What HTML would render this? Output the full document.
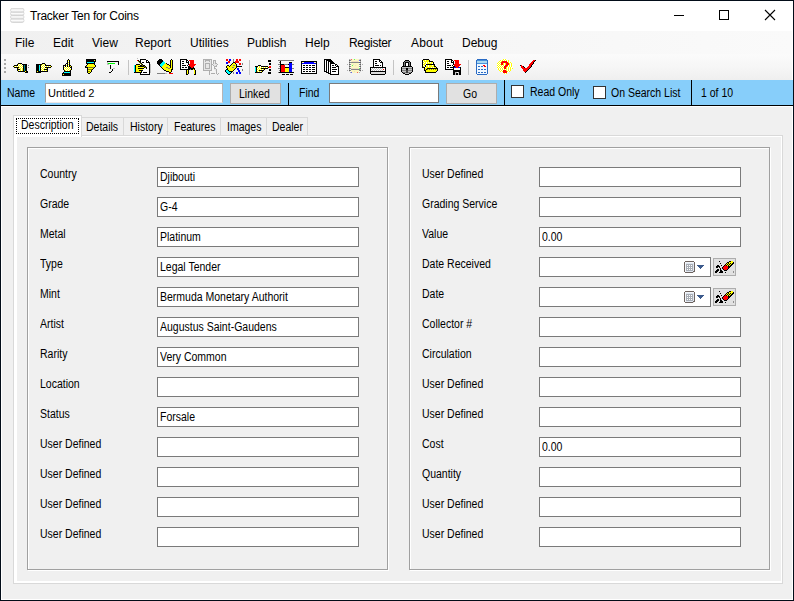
<!DOCTYPE html>
<html><head><meta charset="utf-8"><style>
html,body{margin:0;padding:0;width:794px;height:601px;overflow:hidden;background:#fff}
#win{position:absolute;left:0;top:0;width:794px;height:601px;background:#f0f0f0;font-family:"Liberation Sans",sans-serif;color:#000}
#win *{position:absolute}
.abs{position:absolute}
.t12{font-size:12px;line-height:12px;white-space:pre}
.t11{font-size:12px;line-height:12px;white-space:pre;transform:scaleX(0.875);transform-origin:0 0}
.lb{font-size:12px;line-height:12px;white-space:pre;transform:scaleX(0.875);transform-origin:0 0}
.vl{font-size:12px;line-height:12px;white-space:pre;transform:scaleX(0.875);transform-origin:0 0}
.tb{height:18px;border:1px solid #7a7a7a;background:#fff}
.btn{border:1px solid #adadad;background:#e1e1e1}
.cb{width:11px;height:11px;border:1px solid #333;background:#fff}
.grp{box-sizing:border-box;border:1px solid #a0a0a0;box-shadow:1px 1px 0 #fff, inset 1px 1px 0 #fff}
.ebtn{width:21px;height:16px;border:1px solid #adadad;background:#e1e1e1}
.cal{width:10px;height:11px;border:1px solid #7f7a78;border-radius:1px;background:#eef0f4}
.dbicon{left:10px;top:8px;width:14px;height:14px}
.dbicon i{left:0;width:14px;height:3.5px;border-radius:2px;background:linear-gradient(#d8d8d8,#fafafa 50%,#d0d0d0)}

.bb{font-size:11px;line-height:11px;white-space:pre;transform:scaleX(0.95);transform-origin:0 0}

</style></head><body>
<div id="win">
<!-- title bar -->
<div class="abs" style="left:1px;top:1px;width:792px;height:30px;background:#fff"></div>
<svg class="abs" style="left:10px;top:8px" width="15" height="15" viewBox="0 0 15 15"><defs><linearGradient id="dg" x1="0" x2="0" y1="0" y2="1"><stop offset="0" stop-color="#e6e6e6"/><stop offset="0.5" stop-color="#fbfbfb"/><stop offset="1" stop-color="#d6d6d6"/></linearGradient></defs><rect x="0.5" y="10.5" width="13.5" height="4" rx="2" fill="url(#dg)" stroke="#d2d2d2" stroke-width="0.8"/><rect x="0.5" y="7" width="13.5" height="4" rx="2" fill="url(#dg)" stroke="#d2d2d2" stroke-width="0.8"/><rect x="0.5" y="3.5" width="13.5" height="4" rx="2" fill="url(#dg)" stroke="#d2d2d2" stroke-width="0.8"/><rect x="0.5" y="0.3" width="13.5" height="4" rx="2" fill="url(#dg)" stroke="#d2d2d2" stroke-width="0.8"/></svg>
<div class="t12" style="left:30px;top:10px;letter-spacing:-0.25px">Tracker Ten for Coins</div>
<div class="abs" style="left:674px;top:15px;width:10px;height:1px;background:#000"></div>
<div class="abs" style="left:719px;top:10px;width:8px;height:8px;border:1px solid #000"></div>
<svg class="abs" style="left:764px;top:9px" width="12" height="12"><path d="M1 1L11 11M11 1L1 11" stroke="#000" stroke-width="1.1"/></svg>
<!-- menu -->
<div class="abs" style="left:1px;top:31px;width:791px;height:23px;background:linear-gradient(to right,#f0f0f0,#f5f5f5 45%,#fafafa)"></div>
<div class="t12" style="left:15px;top:37px">File</div>
<div class="t12" style="left:53px;top:37px">Edit</div>
<div class="t12" style="left:92px;top:37px">View</div>
<div class="t12" style="left:135px;top:37px">Report</div>
<div class="t12" style="left:190px;top:37px">Utilities</div>
<div class="t12" style="left:247px;top:37px">Publish</div>
<div class="t12" style="left:305px;top:37px">Help</div>
<div class="t12" style="left:349px;top:37px;letter-spacing:-0.3px">Register</div>
<div class="t12" style="left:411px;top:37px;letter-spacing:0.2px">About</div>
<div class="t12" style="left:462px;top:37px">Debug</div>
<!-- toolbar -->
<div class="abs" style="left:1px;top:54px;width:791px;height:26px;background:linear-gradient(#fbfbfb,#f6f6f6 50%,#efefef)"></div>
<div class="abs" style="left:792px;top:31px;width:1px;height:49px;background:#fff"></div>
<svg class="abs" style="left:12px;top:59px" width="18" height="14" shape-rendering="crispEdges"><rect x="6" y="4" width="4" height="1" fill="#000"/><rect x="5" y="5" width="1" height="1" fill="#000"/><rect x="6" y="5" width="1" height="1" fill="#ffff00"/><rect x="7" y="5" width="1" height="1" fill="#fff"/><rect x="8" y="5" width="1" height="1" fill="#ffff00"/><rect x="9" y="5" width="1" height="1" fill="#fff"/><rect x="10" y="5" width="5" height="1" fill="#000"/><rect x="2" y="6" width="4" height="1" fill="#000"/><rect x="6" y="6" width="1" height="1" fill="#fff"/><rect x="7" y="6" width="1" height="1" fill="#ffff00"/><rect x="8" y="6" width="1" height="1" fill="#fff"/><rect x="9" y="6" width="1" height="1" fill="#ffff00"/><rect x="10" y="6" width="1" height="1" fill="#fff"/><rect x="11" y="6" width="1" height="1" fill="#000"/><rect x="12" y="6" width="1" height="1" fill="#008b8b"/><rect x="13" y="6" width="2" height="1" fill="#000"/><rect x="16" y="6" width="1" height="1" fill="#808080"/><rect x="1" y="7" width="1" height="1" fill="#000"/><rect x="2" y="7" width="1" height="1" fill="#ffff00"/><rect x="3" y="7" width="1" height="1" fill="#fff"/><rect x="4" y="7" width="1" height="1" fill="#ffff00"/><rect x="5" y="7" width="1" height="1" fill="#fff"/><rect x="6" y="7" width="1" height="1" fill="#ffff00"/><rect x="7" y="7" width="1" height="1" fill="#fff"/><rect x="8" y="7" width="1" height="1" fill="#ffff00"/><rect x="9" y="7" width="1" height="1" fill="#fff"/><rect x="10" y="7" width="1" height="1" fill="#ffff00"/><rect x="11" y="7" width="1" height="1" fill="#000"/><rect x="12" y="7" width="1" height="1" fill="#008b8b"/><rect x="13" y="7" width="2" height="1" fill="#000"/><rect x="2" y="8" width="5" height="1" fill="#000"/><rect x="7" y="8" width="1" height="1" fill="#ffff00"/><rect x="8" y="8" width="1" height="1" fill="#fff"/><rect x="9" y="8" width="1" height="1" fill="#ffff00"/><rect x="10" y="8" width="1" height="1" fill="#fff"/><rect x="11" y="8" width="1" height="1" fill="#000"/><rect x="12" y="8" width="1" height="1" fill="#008b8b"/><rect x="13" y="8" width="2" height="1" fill="#000"/><rect x="16" y="8" width="1" height="1" fill="#808080"/><rect x="5" y="9" width="1" height="1" fill="#000"/><rect x="6" y="9" width="1" height="1" fill="#ffff00"/><rect x="7" y="9" width="1" height="1" fill="#fff"/><rect x="8" y="9" width="1" height="1" fill="#ffff00"/><rect x="9" y="9" width="1" height="1" fill="#fff"/><rect x="10" y="9" width="1" height="1" fill="#ffff00"/><rect x="11" y="9" width="1" height="1" fill="#000"/><rect x="12" y="9" width="1" height="1" fill="#008b8b"/><rect x="13" y="9" width="2" height="1" fill="#000"/><rect x="5" y="10" width="3" height="1" fill="#000"/><rect x="8" y="10" width="1" height="1" fill="#ffff00"/><rect x="9" y="10" width="1" height="1" fill="#fff"/><rect x="10" y="10" width="1" height="1" fill="#ffff00"/><rect x="11" y="10" width="1" height="1" fill="#000"/><rect x="12" y="10" width="1" height="1" fill="#008b8b"/><rect x="13" y="10" width="2" height="1" fill="#000"/><rect x="5" y="11" width="1" height="1" fill="#000"/><rect x="6" y="11" width="1" height="1" fill="#ffff00"/><rect x="7" y="11" width="1" height="1" fill="#fff"/><rect x="8" y="11" width="1" height="1" fill="#ffff00"/><rect x="9" y="11" width="1" height="1" fill="#fff"/><rect x="10" y="11" width="1" height="1" fill="#ffff00"/><rect x="11" y="11" width="1" height="1" fill="#000"/><rect x="12" y="11" width="1" height="1" fill="#008b8b"/><rect x="13" y="11" width="2" height="1" fill="#000"/><rect x="6" y="12" width="7" height="1" fill="#000"/><rect x="13" y="12" width="1" height="1" fill="#ffff00"/><rect x="14" y="12" width="2" height="1" fill="#000"/><rect x="13" y="13" width="3" height="1" fill="#000"/></svg>
<svg class="abs" style="left:34px;top:59px" width="18" height="14" shape-rendering="crispEdges"><rect x="8" y="4" width="3" height="1" fill="#000"/><rect x="2" y="5" width="6" height="1" fill="#000"/><rect x="8" y="5" width="1" height="1" fill="#ffff00"/><rect x="9" y="5" width="1" height="1" fill="#fff"/><rect x="10" y="5" width="1" height="1" fill="#ffff00"/><rect x="11" y="5" width="1" height="1" fill="#000"/><rect x="2" y="6" width="3" height="1" fill="#000"/><rect x="5" y="6" width="1" height="1" fill="#00ffff"/><rect x="6" y="6" width="1" height="1" fill="#000"/><rect x="7" y="6" width="1" height="1" fill="#ffff00"/><rect x="8" y="6" width="1" height="1" fill="#fff"/><rect x="9" y="6" width="1" height="1" fill="#ffff00"/><rect x="10" y="6" width="1" height="1" fill="#fff"/><rect x="11" y="6" width="6" height="1" fill="#000"/><rect x="2" y="7" width="3" height="1" fill="#000"/><rect x="5" y="7" width="1" height="1" fill="#00ffff"/><rect x="6" y="7" width="1" height="1" fill="#000"/><rect x="7" y="7" width="1" height="1" fill="#fff"/><rect x="8" y="7" width="1" height="1" fill="#ffff00"/><rect x="9" y="7" width="1" height="1" fill="#fff"/><rect x="10" y="7" width="1" height="1" fill="#ffff00"/><rect x="11" y="7" width="1" height="1" fill="#fff"/><rect x="12" y="7" width="1" height="1" fill="#ffff00"/><rect x="13" y="7" width="1" height="1" fill="#fff"/><rect x="14" y="7" width="1" height="1" fill="#ffff00"/><rect x="15" y="7" width="1" height="1" fill="#fff"/><rect x="16" y="7" width="1" height="1" fill="#ffff00"/><rect x="17" y="7" width="1" height="1" fill="#000"/><rect x="2" y="8" width="3" height="1" fill="#000"/><rect x="5" y="8" width="1" height="1" fill="#00ffff"/><rect x="6" y="8" width="1" height="1" fill="#000"/><rect x="7" y="8" width="1" height="1" fill="#ffff00"/><rect x="8" y="8" width="1" height="1" fill="#fff"/><rect x="9" y="8" width="1" height="1" fill="#ffff00"/><rect x="10" y="8" width="1" height="1" fill="#fff"/><rect x="11" y="8" width="6" height="1" fill="#000"/><rect x="2" y="9" width="3" height="1" fill="#000"/><rect x="5" y="9" width="1" height="1" fill="#00ffff"/><rect x="6" y="9" width="1" height="1" fill="#000"/><rect x="7" y="9" width="1" height="1" fill="#fff"/><rect x="8" y="9" width="1" height="1" fill="#ffff00"/><rect x="9" y="9" width="1" height="1" fill="#fff"/><rect x="10" y="9" width="1" height="1" fill="#ffff00"/><rect x="11" y="9" width="1" height="1" fill="#fff"/><rect x="12" y="9" width="1" height="1" fill="#ffff00"/><rect x="13" y="9" width="1" height="1" fill="#000"/><rect x="2" y="10" width="3" height="1" fill="#000"/><rect x="5" y="10" width="1" height="1" fill="#00ffff"/><rect x="6" y="10" width="1" height="1" fill="#000"/><rect x="7" y="10" width="1" height="1" fill="#ffff00"/><rect x="8" y="10" width="1" height="1" fill="#fff"/><rect x="9" y="10" width="1" height="1" fill="#ffff00"/><rect x="10" y="10" width="4" height="1" fill="#000"/><rect x="2" y="11" width="3" height="1" fill="#000"/><rect x="5" y="11" width="1" height="1" fill="#00ffff"/><rect x="6" y="11" width="1" height="1" fill="#000"/><rect x="7" y="11" width="1" height="1" fill="#fff"/><rect x="8" y="11" width="1" height="1" fill="#ffff00"/><rect x="9" y="11" width="1" height="1" fill="#fff"/><rect x="10" y="11" width="1" height="1" fill="#ffff00"/><rect x="11" y="11" width="1" height="1" fill="#fff"/><rect x="12" y="11" width="1" height="1" fill="#ffff00"/><rect x="13" y="11" width="1" height="1" fill="#000"/><rect x="2" y="12" width="1" height="1" fill="#000"/><rect x="3" y="12" width="1" height="1" fill="#ffff00"/><rect x="4" y="12" width="10" height="1" fill="#000"/><rect x="2" y="13" width="5" height="1" fill="#000"/></svg>
<svg class="abs" style="left:58px;top:57px" width="18" height="19" shape-rendering="crispEdges"><rect x="10" y="2" width="1" height="1" fill="#000"/><rect x="9" y="3" width="1" height="1" fill="#000"/><rect x="10" y="3" width="1" height="1" fill="#ffff00"/><rect x="11" y="3" width="1" height="1" fill="#000"/><rect x="9" y="4" width="1" height="1" fill="#000"/><rect x="10" y="4" width="1" height="1" fill="#fff"/><rect x="11" y="4" width="1" height="1" fill="#000"/><rect x="9" y="5" width="1" height="1" fill="#000"/><rect x="10" y="5" width="1" height="1" fill="#ffff00"/><rect x="11" y="5" width="1" height="1" fill="#000"/><rect x="8" y="6" width="2" height="1" fill="#000"/><rect x="10" y="6" width="1" height="1" fill="#fff"/><rect x="11" y="6" width="1" height="1" fill="#000"/><rect x="7" y="7" width="1" height="1" fill="#000"/><rect x="8" y="7" width="1" height="1" fill="#fff"/><rect x="9" y="7" width="1" height="1" fill="#000"/><rect x="10" y="7" width="1" height="1" fill="#ffff00"/><rect x="11" y="7" width="1" height="1" fill="#000"/><rect x="5" y="8" width="3" height="1" fill="#000"/><rect x="8" y="8" width="1" height="1" fill="#ffff00"/><rect x="9" y="8" width="1" height="1" fill="#000"/><rect x="10" y="8" width="1" height="1" fill="#fff"/><rect x="11" y="8" width="2" height="1" fill="#000"/><rect x="5" y="9" width="1" height="1" fill="#000"/><rect x="6" y="9" width="1" height="1" fill="#fff"/><rect x="7" y="9" width="1" height="1" fill="#000"/><rect x="8" y="9" width="1" height="1" fill="#fff"/><rect x="9" y="9" width="1" height="1" fill="#000"/><rect x="10" y="9" width="1" height="1" fill="#ffff00"/><rect x="11" y="9" width="1" height="1" fill="#000"/><rect x="12" y="9" width="1" height="1" fill="#ffff00"/><rect x="13" y="9" width="1" height="1" fill="#000"/><rect x="5" y="10" width="1" height="1" fill="#000"/><rect x="6" y="10" width="1" height="1" fill="#ffff00"/><rect x="7" y="10" width="1" height="1" fill="#fff"/><rect x="8" y="10" width="1" height="1" fill="#ffff00"/><rect x="9" y="10" width="1" height="1" fill="#fff"/><rect x="10" y="10" width="1" height="1" fill="#ffff00"/><rect x="11" y="10" width="1" height="1" fill="#fff"/><rect x="12" y="10" width="2" height="1" fill="#000"/><rect x="5" y="11" width="1" height="1" fill="#000"/><rect x="6" y="11" width="1" height="1" fill="#fff"/><rect x="7" y="11" width="1" height="1" fill="#ffff00"/><rect x="8" y="11" width="1" height="1" fill="#fff"/><rect x="9" y="11" width="1" height="1" fill="#ffff00"/><rect x="10" y="11" width="1" height="1" fill="#fff"/><rect x="11" y="11" width="1" height="1" fill="#ffff00"/><rect x="12" y="11" width="1" height="1" fill="#fff"/><rect x="13" y="11" width="1" height="1" fill="#000"/><rect x="5" y="12" width="1" height="1" fill="#000"/><rect x="6" y="12" width="1" height="1" fill="#ffff00"/><rect x="7" y="12" width="1" height="1" fill="#fff"/><rect x="8" y="12" width="1" height="1" fill="#ffff00"/><rect x="9" y="12" width="1" height="1" fill="#fff"/><rect x="10" y="12" width="1" height="1" fill="#ffff00"/><rect x="11" y="12" width="1" height="1" fill="#fff"/><rect x="12" y="12" width="1" height="1" fill="#ffff00"/><rect x="13" y="12" width="1" height="1" fill="#000"/><rect x="6" y="13" width="1" height="1" fill="#000"/><rect x="7" y="13" width="1" height="1" fill="#ffff00"/><rect x="8" y="13" width="1" height="1" fill="#fff"/><rect x="9" y="13" width="1" height="1" fill="#ffff00"/><rect x="10" y="13" width="1" height="1" fill="#fff"/><rect x="11" y="13" width="1" height="1" fill="#ffff00"/><rect x="12" y="13" width="1" height="1" fill="#000"/><rect x="6" y="14" width="7" height="1" fill="#000"/><rect x="5" y="15" width="1" height="1" fill="#000"/><rect x="6" y="15" width="6" height="1" fill="#00ffff"/><rect x="12" y="15" width="1" height="1" fill="#000"/><rect x="4" y="16" width="9" height="1" fill="#000"/><rect x="4" y="17" width="1" height="1" fill="#000"/><rect x="5" y="17" width="1" height="1" fill="#ffff00"/><rect x="6" y="17" width="7" height="1" fill="#000"/><rect x="4" y="18" width="9" height="1" fill="#000"/></svg>
<svg class="abs" style="left:82px;top:57px" width="18" height="17" shape-rendering="crispEdges"><rect x="4" y="2" width="10" height="1" fill="#000"/><rect x="4" y="3" width="8" height="1" fill="#000"/><rect x="12" y="3" width="1" height="1" fill="#ffff00"/><rect x="13" y="3" width="1" height="1" fill="#000"/><rect x="4" y="4" width="10" height="1" fill="#000"/><rect x="4" y="5" width="1" height="1" fill="#000"/><rect x="5" y="5" width="7" height="1" fill="#00ffff"/><rect x="12" y="5" width="1" height="1" fill="#000"/><rect x="4" y="6" width="9" height="1" fill="#000"/><rect x="5" y="7" width="1" height="1" fill="#000"/><rect x="6" y="7" width="6" height="1" fill="#ffff00"/><rect x="12" y="7" width="1" height="1" fill="#000"/><rect x="4" y="8" width="1" height="1" fill="#000"/><rect x="5" y="8" width="8" height="1" fill="#ffff00"/><rect x="13" y="8" width="1" height="1" fill="#000"/><rect x="3" y="9" width="1" height="1" fill="#000"/><rect x="4" y="9" width="1" height="1" fill="#808080"/><rect x="5" y="9" width="8" height="1" fill="#ffff00"/><rect x="13" y="9" width="1" height="1" fill="#000"/><rect x="3" y="10" width="3" height="1" fill="#000"/><rect x="6" y="10" width="1" height="1" fill="#808080"/><rect x="7" y="10" width="4" height="1" fill="#808000"/><rect x="11" y="10" width="1" height="1" fill="#808080"/><rect x="12" y="10" width="1" height="1" fill="#000"/><rect x="5" y="11" width="1" height="1" fill="#000"/><rect x="6" y="11" width="5" height="1" fill="#ffff00"/><rect x="11" y="11" width="1" height="1" fill="#000"/><rect x="5" y="12" width="1" height="1" fill="#000"/><rect x="6" y="12" width="4" height="1" fill="#808000"/><rect x="10" y="12" width="1" height="1" fill="#000"/><rect x="5" y="13" width="1" height="1" fill="#000"/><rect x="6" y="13" width="3" height="1" fill="#ffff00"/><rect x="9" y="13" width="1" height="1" fill="#000"/><rect x="5" y="14" width="1" height="1" fill="#000"/><rect x="6" y="14" width="2" height="1" fill="#808000"/><rect x="8" y="14" width="1" height="1" fill="#ffff00"/><rect x="9" y="14" width="1" height="1" fill="#000"/><rect x="5" y="15" width="1" height="1" fill="#000"/><rect x="6" y="15" width="2" height="1" fill="#ffff00"/><rect x="8" y="15" width="1" height="1" fill="#000"/><rect x="6" y="16" width="2" height="1" fill="#000"/></svg>
<svg class="abs" style="left:104px;top:57px" width="18" height="16" shape-rendering="crispEdges"><rect x="3" y="4" width="12" height="1" fill="#000"/><rect x="3" y="5" width="1" height="1" fill="#c0c0c0"/><rect x="14" y="5" width="1" height="1" fill="#000"/><rect x="3" y="6" width="1" height="1" fill="#c0c0c0"/><rect x="4" y="6" width="7" height="1" fill="#00ff00"/><rect x="14" y="6" width="1" height="1" fill="#000"/><rect x="3" y="7" width="2" height="1" fill="#c0c0c0"/><rect x="14" y="7" width="1" height="1" fill="#000"/><rect x="6" y="8" width="1" height="1" fill="#000"/><rect x="6" y="9" width="1" height="1" fill="#000"/><rect x="6" y="10" width="1" height="1" fill="#000"/><rect x="6" y="11" width="1" height="1" fill="#000"/><rect x="9" y="11" width="2" height="1" fill="#c0c0c0"/><rect x="8" y="12" width="1" height="1" fill="#000"/><rect x="8" y="13" width="1" height="1" fill="#000"/><rect x="7" y="14" width="1" height="1" fill="#000"/><rect x="5" y="15" width="2" height="1" fill="#000"/></svg>
<svg class="abs" style="left:132px;top:57px" width="20" height="18" shape-rendering="crispEdges"><rect x="5" y="1" width="1" height="1" fill="#c0c0c0"/><rect x="8" y="2" width="6" height="1" fill="#000"/><rect x="5" y="3" width="1" height="1" fill="#ff0000"/><rect x="6" y="3" width="1" height="1" fill="#000"/><rect x="8" y="3" width="1" height="1" fill="#000"/><rect x="9" y="3" width="5" height="1" fill="#fff"/><rect x="14" y="3" width="2" height="1" fill="#000"/><rect x="6" y="4" width="1" height="1" fill="#808000"/><rect x="7" y="4" width="2" height="1" fill="#000"/><rect x="9" y="4" width="5" height="1" fill="#fff"/><rect x="14" y="4" width="1" height="1" fill="#000"/><rect x="15" y="4" width="1" height="1" fill="#fff"/><rect x="16" y="4" width="1" height="1" fill="#000"/><rect x="7" y="5" width="1" height="1" fill="#808000"/><rect x="8" y="5" width="1" height="1" fill="#000"/><rect x="9" y="5" width="1" height="1" fill="#fff"/><rect x="10" y="5" width="2" height="1" fill="#000"/><rect x="12" y="5" width="2" height="1" fill="#fff"/><rect x="14" y="5" width="4" height="1" fill="#000"/><rect x="8" y="6" width="1" height="1" fill="#808000"/><rect x="9" y="6" width="1" height="1" fill="#000"/><rect x="10" y="6" width="7" height="1" fill="#fff"/><rect x="17" y="6" width="1" height="1" fill="#000"/><rect x="4" y="7" width="4" height="1" fill="#000"/><rect x="9" y="7" width="1" height="1" fill="#808000"/><rect x="10" y="7" width="1" height="1" fill="#000"/><rect x="11" y="7" width="6" height="1" fill="#fff"/><rect x="17" y="7" width="1" height="1" fill="#000"/><rect x="18" y="7" width="1" height="1" fill="#c0c0c0"/><rect x="2" y="8" width="1" height="1" fill="#00ffff"/><rect x="3" y="8" width="1" height="1" fill="#000"/><rect x="4" y="8" width="4" height="1" fill="#ffff00"/><rect x="8" y="8" width="2" height="1" fill="#000"/><rect x="10" y="8" width="1" height="1" fill="#808000"/><rect x="11" y="8" width="2" height="1" fill="#000"/><rect x="13" y="8" width="4" height="1" fill="#fff"/><rect x="17" y="8" width="1" height="1" fill="#000"/><rect x="18" y="8" width="1" height="1" fill="#c0c0c0"/><rect x="2" y="9" width="1" height="1" fill="#00ffff"/><rect x="3" y="9" width="1" height="1" fill="#000"/><rect x="4" y="9" width="2" height="1" fill="#ffff00"/><rect x="6" y="9" width="6" height="1" fill="#000"/><rect x="12" y="9" width="1" height="1" fill="#808000"/><rect x="13" y="9" width="1" height="1" fill="#000"/><rect x="14" y="9" width="3" height="1" fill="#fff"/><rect x="17" y="9" width="1" height="1" fill="#000"/><rect x="18" y="9" width="1" height="1" fill="#c0c0c0"/><rect x="2" y="10" width="1" height="1" fill="#00ffff"/><rect x="3" y="10" width="1" height="1" fill="#000"/><rect x="4" y="10" width="8" height="1" fill="#ffff00"/><rect x="12" y="10" width="1" height="1" fill="#000"/><rect x="13" y="10" width="1" height="1" fill="#808000"/><rect x="14" y="10" width="1" height="1" fill="#000"/><rect x="15" y="10" width="2" height="1" fill="#fff"/><rect x="17" y="10" width="1" height="1" fill="#000"/><rect x="18" y="10" width="1" height="1" fill="#c0c0c0"/><rect x="2" y="11" width="1" height="1" fill="#00ffff"/><rect x="3" y="11" width="1" height="1" fill="#000"/><rect x="4" y="11" width="2" height="1" fill="#ffff00"/><rect x="6" y="11" width="6" height="1" fill="#000"/><rect x="12" y="11" width="2" height="1" fill="#fff"/><rect x="14" y="11" width="1" height="1" fill="#000"/><rect x="15" y="11" width="2" height="1" fill="#fff"/><rect x="17" y="11" width="1" height="1" fill="#000"/><rect x="18" y="11" width="1" height="1" fill="#c0c0c0"/><rect x="2" y="12" width="1" height="1" fill="#00ffff"/><rect x="3" y="12" width="1" height="1" fill="#000"/><rect x="4" y="12" width="7" height="1" fill="#ffff00"/><rect x="11" y="12" width="6" height="1" fill="#fff"/><rect x="17" y="12" width="1" height="1" fill="#000"/><rect x="18" y="12" width="1" height="1" fill="#c0c0c0"/><rect x="2" y="13" width="1" height="1" fill="#00ffff"/><rect x="3" y="13" width="1" height="1" fill="#000"/><rect x="4" y="13" width="3" height="1" fill="#ffff00"/><rect x="7" y="13" width="4" height="1" fill="#000"/><rect x="11" y="13" width="6" height="1" fill="#fff"/><rect x="17" y="13" width="1" height="1" fill="#000"/><rect x="18" y="13" width="1" height="1" fill="#c0c0c0"/><rect x="2" y="14" width="1" height="1" fill="#00ffff"/><rect x="3" y="14" width="1" height="1" fill="#000"/><rect x="4" y="14" width="5" height="1" fill="#ffff00"/><rect x="9" y="14" width="1" height="1" fill="#000"/><rect x="10" y="14" width="7" height="1" fill="#fff"/><rect x="17" y="14" width="1" height="1" fill="#000"/><rect x="18" y="14" width="1" height="1" fill="#c0c0c0"/><rect x="2" y="15" width="8" height="1" fill="#000"/><rect x="10" y="15" width="1" height="1" fill="#fff"/><rect x="11" y="15" width="4" height="1" fill="#000"/><rect x="15" y="15" width="2" height="1" fill="#fff"/><rect x="17" y="15" width="1" height="1" fill="#000"/><rect x="18" y="15" width="1" height="1" fill="#c0c0c0"/><rect x="8" y="16" width="1" height="1" fill="#000"/><rect x="9" y="16" width="8" height="1" fill="#fff"/><rect x="17" y="16" width="1" height="1" fill="#000"/><rect x="8" y="17" width="10" height="1" fill="#000"/></svg>
<svg class="abs" style="left:155px;top:57px" width="20" height="17" shape-rendering="crispEdges"><rect x="4" y="2" width="3" height="1" fill="#000"/><rect x="16" y="2" width="1" height="1" fill="#000"/><rect x="3" y="3" width="5" height="1" fill="#000"/><rect x="15" y="3" width="1" height="1" fill="#000"/><rect x="16" y="3" width="1" height="1" fill="#ffff00"/><rect x="17" y="3" width="1" height="1" fill="#000"/><rect x="2" y="4" width="6" height="1" fill="#000"/><rect x="8" y="4" width="1" height="1" fill="#00ffff"/><rect x="15" y="4" width="1" height="1" fill="#000"/><rect x="16" y="4" width="1" height="1" fill="#ffff00"/><rect x="17" y="4" width="1" height="1" fill="#000"/><rect x="2" y="5" width="5" height="1" fill="#000"/><rect x="7" y="5" width="3" height="1" fill="#00ffff"/><rect x="15" y="5" width="1" height="1" fill="#000"/><rect x="16" y="5" width="1" height="1" fill="#ffff00"/><rect x="17" y="5" width="1" height="1" fill="#000"/><rect x="2" y="6" width="4" height="1" fill="#000"/><rect x="6" y="6" width="4" height="1" fill="#00ffff"/><rect x="10" y="6" width="1" height="1" fill="#ffff00"/><rect x="11" y="6" width="1" height="1" fill="#000"/><rect x="15" y="6" width="1" height="1" fill="#000"/><rect x="16" y="6" width="1" height="1" fill="#ffff00"/><rect x="17" y="6" width="1" height="1" fill="#000"/><rect x="3" y="7" width="2" height="1" fill="#000"/><rect x="5" y="7" width="4" height="1" fill="#00ffff"/><rect x="9" y="7" width="3" height="1" fill="#ffff00"/><rect x="12" y="7" width="2" height="1" fill="#000"/><rect x="15" y="7" width="1" height="1" fill="#000"/><rect x="16" y="7" width="1" height="1" fill="#ffff00"/><rect x="17" y="7" width="1" height="1" fill="#000"/><rect x="4" y="8" width="1" height="1" fill="#000"/><rect x="5" y="8" width="3" height="1" fill="#00ffff"/><rect x="8" y="8" width="6" height="1" fill="#ffff00"/><rect x="14" y="8" width="2" height="1" fill="#000"/><rect x="16" y="8" width="1" height="1" fill="#ffff00"/><rect x="17" y="8" width="1" height="1" fill="#000"/><rect x="5" y="9" width="1" height="1" fill="#000"/><rect x="6" y="9" width="1" height="1" fill="#00ffff"/><rect x="7" y="9" width="8" height="1" fill="#ffff00"/><rect x="15" y="9" width="1" height="1" fill="#000"/><rect x="16" y="9" width="1" height="1" fill="#ffff00"/><rect x="17" y="9" width="1" height="1" fill="#000"/><rect x="6" y="10" width="1" height="1" fill="#000"/><rect x="7" y="10" width="4" height="1" fill="#ffff00"/><rect x="11" y="10" width="2" height="1" fill="#808080"/><rect x="13" y="10" width="2" height="1" fill="#ffff00"/><rect x="15" y="10" width="1" height="1" fill="#000"/><rect x="16" y="10" width="1" height="1" fill="#ffff00"/><rect x="17" y="10" width="1" height="1" fill="#000"/><rect x="7" y="11" width="1" height="1" fill="#000"/><rect x="8" y="11" width="5" height="1" fill="#ffff00"/><rect x="13" y="11" width="2" height="1" fill="#808080"/><rect x="15" y="11" width="2" height="1" fill="#ffff00"/><rect x="17" y="11" width="1" height="1" fill="#000"/><rect x="8" y="12" width="1" height="1" fill="#000"/><rect x="9" y="12" width="7" height="1" fill="#ffff00"/><rect x="16" y="12" width="2" height="1" fill="#000"/><rect x="9" y="13" width="2" height="1" fill="#000"/><rect x="11" y="13" width="5" height="1" fill="#ffff00"/><rect x="16" y="13" width="1" height="1" fill="#000"/><rect x="11" y="14" width="3" height="1" fill="#000"/><rect x="14" y="14" width="2" height="1" fill="#ffff00"/><rect x="16" y="14" width="1" height="1" fill="#000"/><rect x="14" y="15" width="2" height="1" fill="#000"/><rect x="2" y="16" width="8" height="1" fill="#808080"/><rect x="10" y="16" width="2" height="1" fill="#c0c0c0"/><rect x="14" y="16" width="4" height="1" fill="#ff0000"/></svg>
<svg class="abs" style="left:178px;top:57px" width="20" height="18" shape-rendering="crispEdges"><rect x="2" y="2" width="7" height="1" fill="#000"/><rect x="2" y="3" width="1" height="1" fill="#000"/><rect x="3" y="3" width="5" height="1" fill="#fff"/><rect x="8" y="3" width="2" height="1" fill="#000"/><rect x="11" y="3" width="5" height="1" fill="#ff0000"/><rect x="2" y="4" width="1" height="1" fill="#000"/><rect x="3" y="4" width="1" height="1" fill="#fff"/><rect x="4" y="4" width="2" height="1" fill="#000"/><rect x="6" y="4" width="2" height="1" fill="#fff"/><rect x="8" y="4" width="1" height="1" fill="#000"/><rect x="9" y="4" width="1" height="1" fill="#fff"/><rect x="10" y="4" width="1" height="1" fill="#000"/><rect x="12" y="4" width="4" height="1" fill="#ff0000"/><rect x="2" y="5" width="1" height="1" fill="#000"/><rect x="3" y="5" width="5" height="1" fill="#fff"/><rect x="8" y="5" width="3" height="1" fill="#000"/><rect x="12" y="5" width="4" height="1" fill="#ff0000"/><rect x="2" y="6" width="1" height="1" fill="#000"/><rect x="3" y="6" width="1" height="1" fill="#fff"/><rect x="4" y="6" width="2" height="1" fill="#000"/><rect x="6" y="6" width="4" height="1" fill="#fff"/><rect x="10" y="6" width="1" height="1" fill="#000"/><rect x="12" y="6" width="4" height="1" fill="#ff0000"/><rect x="2" y="7" width="1" height="1" fill="#000"/><rect x="3" y="7" width="7" height="1" fill="#fff"/><rect x="10" y="7" width="1" height="1" fill="#000"/><rect x="11" y="7" width="7" height="1" fill="#ff0000"/><rect x="2" y="8" width="1" height="1" fill="#000"/><rect x="3" y="8" width="1" height="1" fill="#fff"/><rect x="4" y="8" width="4" height="1" fill="#000"/><rect x="8" y="8" width="1" height="1" fill="#fff"/><rect x="9" y="8" width="1" height="1" fill="#000"/><rect x="10" y="8" width="1" height="1" fill="#fff"/><rect x="11" y="8" width="6" height="1" fill="#ff0000"/><rect x="2" y="9" width="1" height="1" fill="#000"/><rect x="3" y="9" width="7" height="1" fill="#fff"/><rect x="10" y="9" width="2" height="1" fill="#000"/><rect x="12" y="9" width="4" height="1" fill="#ff0000"/><rect x="2" y="10" width="1" height="1" fill="#000"/><rect x="3" y="10" width="1" height="1" fill="#fff"/><rect x="4" y="10" width="2" height="1" fill="#000"/><rect x="6" y="10" width="1" height="1" fill="#fff"/><rect x="7" y="10" width="2" height="1" fill="#000"/><rect x="9" y="10" width="1" height="1" fill="#fff"/><rect x="10" y="10" width="3" height="1" fill="#000"/><rect x="13" y="10" width="2" height="1" fill="#ff0000"/><rect x="15" y="10" width="1" height="1" fill="#000"/><rect x="2" y="11" width="1" height="1" fill="#000"/><rect x="3" y="11" width="7" height="1" fill="#fff"/><rect x="10" y="11" width="7" height="1" fill="#000"/><rect x="2" y="12" width="10" height="1" fill="#000"/><rect x="12" y="12" width="1" height="1" fill="#808080"/><rect x="13" y="12" width="2" height="1" fill="#000"/><rect x="15" y="12" width="1" height="1" fill="#ffff00"/><rect x="16" y="12" width="1" height="1" fill="#000"/><rect x="8" y="13" width="1" height="1" fill="#000"/><rect x="9" y="13" width="1" height="1" fill="#ffff00"/><rect x="10" y="13" width="1" height="1" fill="#000"/><rect x="16" y="13" width="1" height="1" fill="#ffff00"/><rect x="17" y="13" width="1" height="1" fill="#000"/><rect x="8" y="14" width="1" height="1" fill="#000"/><rect x="9" y="14" width="1" height="1" fill="#ffff00"/><rect x="10" y="14" width="1" height="1" fill="#000"/><rect x="16" y="14" width="1" height="1" fill="#ffff00"/><rect x="17" y="14" width="1" height="1" fill="#000"/><rect x="8" y="15" width="1" height="1" fill="#000"/><rect x="9" y="15" width="1" height="1" fill="#ffff00"/><rect x="10" y="15" width="1" height="1" fill="#000"/><rect x="16" y="15" width="1" height="1" fill="#ffff00"/><rect x="17" y="15" width="1" height="1" fill="#000"/><rect x="8" y="16" width="1" height="1" fill="#000"/><rect x="9" y="16" width="1" height="1" fill="#ffff00"/><rect x="10" y="16" width="1" height="1" fill="#000"/><rect x="16" y="16" width="1" height="1" fill="#ffff00"/><rect x="17" y="16" width="1" height="1" fill="#000"/><rect x="8" y="17" width="2" height="1" fill="#000"/><rect x="16" y="17" width="2" height="1" fill="#000"/></svg>
<svg class="abs" style="left:201px;top:57px;opacity:0.6" width="20" height="18" shape-rendering="crispEdges"><rect x="2" y="2" width="9" height="1" fill="#808080"/><rect x="2" y="3" width="1" height="1" fill="#808080"/><rect x="3" y="3" width="1" height="1" fill="#dcdcdc"/><rect x="4" y="3" width="5" height="1" fill="#808080"/><rect x="9" y="3" width="1" height="1" fill="#dcdcdc"/><rect x="10" y="3" width="1" height="1" fill="#808080"/><rect x="12" y="3" width="3" height="1" fill="#808080"/><rect x="2" y="4" width="1" height="1" fill="#808080"/><rect x="3" y="4" width="1" height="1" fill="#dcdcdc"/><rect x="4" y="4" width="1" height="1" fill="#808080"/><rect x="5" y="4" width="3" height="1" fill="#dcdcdc"/><rect x="8" y="4" width="1" height="1" fill="#808080"/><rect x="9" y="4" width="1" height="1" fill="#dcdcdc"/><rect x="10" y="4" width="1" height="1" fill="#808080"/><rect x="12" y="4" width="1" height="1" fill="#808080"/><rect x="13" y="4" width="1" height="1" fill="#dcdcdc"/><rect x="14" y="4" width="1" height="1" fill="#808080"/><rect x="2" y="5" width="1" height="1" fill="#808080"/><rect x="3" y="5" width="7" height="1" fill="#dcdcdc"/><rect x="10" y="5" width="1" height="1" fill="#808080"/><rect x="12" y="5" width="1" height="1" fill="#808080"/><rect x="13" y="5" width="1" height="1" fill="#dcdcdc"/><rect x="14" y="5" width="1" height="1" fill="#808080"/><rect x="2" y="6" width="1" height="1" fill="#808080"/><rect x="3" y="6" width="1" height="1" fill="#dcdcdc"/><rect x="4" y="6" width="5" height="1" fill="#808080"/><rect x="9" y="6" width="1" height="1" fill="#dcdcdc"/><rect x="10" y="6" width="1" height="1" fill="#808080"/><rect x="12" y="6" width="1" height="1" fill="#808080"/><rect x="13" y="6" width="1" height="1" fill="#dcdcdc"/><rect x="14" y="6" width="2" height="1" fill="#808080"/><rect x="2" y="7" width="1" height="1" fill="#808080"/><rect x="3" y="7" width="1" height="1" fill="#dcdcdc"/><rect x="4" y="7" width="1" height="1" fill="#808080"/><rect x="5" y="7" width="3" height="1" fill="#dcdcdc"/><rect x="8" y="7" width="1" height="1" fill="#808080"/><rect x="9" y="7" width="1" height="1" fill="#dcdcdc"/><rect x="10" y="7" width="2" height="1" fill="#808080"/><rect x="12" y="7" width="4" height="1" fill="#dcdcdc"/><rect x="16" y="7" width="1" height="1" fill="#808080"/><rect x="2" y="8" width="1" height="1" fill="#808080"/><rect x="3" y="8" width="1" height="1" fill="#dcdcdc"/><rect x="4" y="8" width="1" height="1" fill="#808080"/><rect x="5" y="8" width="3" height="1" fill="#dcdcdc"/><rect x="8" y="8" width="1" height="1" fill="#808080"/><rect x="9" y="8" width="1" height="1" fill="#dcdcdc"/><rect x="10" y="8" width="1" height="1" fill="#808080"/><rect x="12" y="8" width="1" height="1" fill="#808080"/><rect x="13" y="8" width="2" height="1" fill="#dcdcdc"/><rect x="15" y="8" width="1" height="1" fill="#808080"/><rect x="2" y="9" width="1" height="1" fill="#808080"/><rect x="3" y="9" width="1" height="1" fill="#dcdcdc"/><rect x="4" y="9" width="1" height="1" fill="#808080"/><rect x="5" y="9" width="3" height="1" fill="#dcdcdc"/><rect x="8" y="9" width="1" height="1" fill="#808080"/><rect x="9" y="9" width="1" height="1" fill="#dcdcdc"/><rect x="10" y="9" width="1" height="1" fill="#808080"/><rect x="13" y="9" width="3" height="1" fill="#808080"/><rect x="2" y="10" width="1" height="1" fill="#808080"/><rect x="3" y="10" width="1" height="1" fill="#dcdcdc"/><rect x="4" y="10" width="1" height="1" fill="#808080"/><rect x="5" y="10" width="3" height="1" fill="#dcdcdc"/><rect x="8" y="10" width="1" height="1" fill="#808080"/><rect x="9" y="10" width="1" height="1" fill="#dcdcdc"/><rect x="10" y="10" width="1" height="1" fill="#808080"/><rect x="13" y="10" width="1" height="1" fill="#808080"/><rect x="2" y="11" width="1" height="1" fill="#808080"/><rect x="3" y="11" width="1" height="1" fill="#dcdcdc"/><rect x="4" y="11" width="5" height="1" fill="#808080"/><rect x="9" y="11" width="1" height="1" fill="#dcdcdc"/><rect x="10" y="11" width="1" height="1" fill="#808080"/><rect x="13" y="11" width="2" height="1" fill="#808080"/><rect x="2" y="12" width="1" height="1" fill="#808080"/><rect x="3" y="12" width="7" height="1" fill="#dcdcdc"/><rect x="10" y="12" width="1" height="1" fill="#808080"/><rect x="13" y="12" width="2" height="1" fill="#dcdcdc"/><rect x="15" y="12" width="1" height="1" fill="#808080"/><rect x="2" y="13" width="9" height="1" fill="#808080"/><rect x="14" y="13" width="1" height="1" fill="#dcdcdc"/><rect x="15" y="13" width="1" height="1" fill="#808080"/><rect x="8" y="14" width="1" height="1" fill="#808080"/><rect x="15" y="14" width="1" height="1" fill="#808080"/><rect x="8" y="15" width="1" height="1" fill="#808080"/><rect x="15" y="15" width="1" height="1" fill="#808080"/><rect x="8" y="16" width="1" height="1" fill="#808080"/><rect x="10" y="16" width="4" height="1" fill="#808080"/><rect x="15" y="16" width="1" height="1" fill="#808080"/><rect x="17" y="16" width="1" height="1" fill="#808080"/><rect x="8" y="17" width="1" height="1" fill="#808080"/><rect x="16" y="17" width="1" height="1" fill="#808080"/></svg>
<svg class="abs" style="left:224px;top:57px" width="20" height="18" shape-rendering="crispEdges"><rect x="2" y="2" width="2" height="1" fill="#ff0000"/><rect x="5" y="2" width="2" height="1" fill="#0000ff"/><rect x="9" y="2" width="1" height="1" fill="#808080"/><rect x="12" y="2" width="2" height="1" fill="#ff0000"/><rect x="15" y="2" width="2" height="1" fill="#ff0000"/><rect x="2" y="3" width="2" height="1" fill="#ff0000"/><rect x="5" y="3" width="2" height="1" fill="#0000ff"/><rect x="9" y="3" width="1" height="1" fill="#808080"/><rect x="12" y="3" width="2" height="1" fill="#ff0000"/><rect x="15" y="3" width="2" height="1" fill="#ff0000"/><rect x="4" y="4" width="2" height="1" fill="#ff0000"/><rect x="9" y="4" width="1" height="1" fill="#808080"/><rect x="11" y="4" width="4" height="1" fill="#ff0000"/><rect x="2" y="5" width="2" height="1" fill="#0000ff"/><rect x="4" y="5" width="2" height="1" fill="#ff0000"/><rect x="9" y="5" width="2" height="1" fill="#000"/><rect x="11" y="5" width="4" height="1" fill="#ff0000"/><rect x="2" y="6" width="2" height="1" fill="#0000ff"/><rect x="8" y="6" width="1" height="1" fill="#000"/><rect x="9" y="6" width="2" height="1" fill="#ffff00"/><rect x="11" y="6" width="1" height="1" fill="#000"/><rect x="15" y="6" width="2" height="1" fill="#ff0000"/><rect x="18" y="6" width="1" height="1" fill="#808080"/><rect x="7" y="7" width="1" height="1" fill="#000"/><rect x="8" y="7" width="4" height="1" fill="#ffff00"/><rect x="12" y="7" width="1" height="1" fill="#000"/><rect x="15" y="7" width="2" height="1" fill="#ff0000"/><rect x="18" y="7" width="1" height="1" fill="#808080"/><rect x="3" y="8" width="2" height="1" fill="#000"/><rect x="6" y="8" width="1" height="1" fill="#000"/><rect x="7" y="8" width="2" height="1" fill="#ffff00"/><rect x="9" y="8" width="2" height="1" fill="#808080"/><rect x="11" y="8" width="1" height="1" fill="#ffff00"/><rect x="12" y="8" width="1" height="1" fill="#000"/><rect x="2" y="9" width="1" height="1" fill="#000"/><rect x="3" y="9" width="2" height="1" fill="#ffff00"/><rect x="5" y="9" width="1" height="1" fill="#000"/><rect x="6" y="9" width="6" height="1" fill="#ffff00"/><rect x="12" y="9" width="6" height="1" fill="#000"/><rect x="2" y="10" width="1" height="1" fill="#000"/><rect x="3" y="10" width="5" height="1" fill="#ffff00"/><rect x="8" y="10" width="2" height="1" fill="#808080"/><rect x="10" y="10" width="2" height="1" fill="#ffff00"/><rect x="12" y="10" width="1" height="1" fill="#000"/><rect x="3" y="11" width="1" height="1" fill="#000"/><rect x="4" y="11" width="7" height="1" fill="#ffff00"/><rect x="11" y="11" width="1" height="1" fill="#000"/><rect x="13" y="11" width="2" height="1" fill="#0000ff"/><rect x="2" y="12" width="2" height="1" fill="#000"/><rect x="4" y="12" width="6" height="1" fill="#ffff00"/><rect x="10" y="12" width="1" height="1" fill="#000"/><rect x="13" y="12" width="2" height="1" fill="#0000ff"/><rect x="18" y="12" width="1" height="1" fill="#808080"/><rect x="1" y="13" width="1" height="1" fill="#000"/><rect x="2" y="13" width="2" height="1" fill="#00ffff"/><rect x="4" y="13" width="1" height="1" fill="#000"/><rect x="5" y="13" width="4" height="1" fill="#ffff00"/><rect x="9" y="13" width="1" height="1" fill="#000"/><rect x="14" y="13" width="2" height="1" fill="#0000ff"/><rect x="18" y="13" width="1" height="1" fill="#808080"/><rect x="1" y="14" width="1" height="1" fill="#000"/><rect x="2" y="14" width="3" height="1" fill="#00ffff"/><rect x="5" y="14" width="4" height="1" fill="#000"/><rect x="14" y="14" width="2" height="1" fill="#0000ff"/><rect x="2" y="15" width="1" height="1" fill="#000"/><rect x="3" y="15" width="4" height="1" fill="#00ffff"/><rect x="7" y="15" width="1" height="1" fill="#000"/><rect x="9" y="15" width="1" height="1" fill="#808080"/><rect x="12" y="15" width="2" height="1" fill="#0000ff"/><rect x="15" y="15" width="2" height="1" fill="#0000ff"/><rect x="3" y="16" width="1" height="1" fill="#000"/><rect x="4" y="16" width="2" height="1" fill="#00ffff"/><rect x="6" y="16" width="1" height="1" fill="#000"/><rect x="9" y="16" width="1" height="1" fill="#808080"/><rect x="12" y="16" width="2" height="1" fill="#0000ff"/><rect x="15" y="16" width="2" height="1" fill="#0000ff"/><rect x="4" y="17" width="2" height="1" fill="#000"/></svg>
<svg class="abs" style="left:253px;top:57px" width="20" height="17" shape-rendering="crispEdges"><rect x="15" y="3" width="3" height="1" fill="#000"/><rect x="15" y="4" width="3" height="1" fill="#000"/><rect x="16" y="6" width="2" height="1" fill="#000"/><rect x="16" y="7" width="2" height="1" fill="#000"/><rect x="5" y="8" width="3" height="1" fill="#000"/><rect x="2" y="9" width="3" height="1" fill="#000"/><rect x="5" y="9" width="1" height="1" fill="#fff"/><rect x="6" y="9" width="1" height="1" fill="#ffff00"/><rect x="7" y="9" width="1" height="1" fill="#fff"/><rect x="8" y="9" width="7" height="1" fill="#000"/><rect x="16" y="9" width="2" height="1" fill="#ff0000"/><rect x="2" y="10" width="1" height="1" fill="#00ffff"/><rect x="3" y="10" width="1" height="1" fill="#000"/><rect x="4" y="10" width="1" height="1" fill="#ffff00"/><rect x="5" y="10" width="1" height="1" fill="#fff"/><rect x="6" y="10" width="1" height="1" fill="#ffff00"/><rect x="7" y="10" width="1" height="1" fill="#fff"/><rect x="8" y="10" width="1" height="1" fill="#ffff00"/><rect x="9" y="10" width="1" height="1" fill="#fff"/><rect x="10" y="10" width="1" height="1" fill="#ffff00"/><rect x="11" y="10" width="1" height="1" fill="#fff"/><rect x="12" y="10" width="1" height="1" fill="#ffff00"/><rect x="13" y="10" width="1" height="1" fill="#fff"/><rect x="14" y="10" width="1" height="1" fill="#ffff00"/><rect x="15" y="10" width="1" height="1" fill="#000"/><rect x="16" y="10" width="2" height="1" fill="#ff0000"/><rect x="2" y="11" width="1" height="1" fill="#00ffff"/><rect x="3" y="11" width="1" height="1" fill="#000"/><rect x="4" y="11" width="1" height="1" fill="#fff"/><rect x="5" y="11" width="1" height="1" fill="#ffff00"/><rect x="6" y="11" width="1" height="1" fill="#fff"/><rect x="7" y="11" width="1" height="1" fill="#ffff00"/><rect x="8" y="11" width="7" height="1" fill="#000"/><rect x="2" y="12" width="1" height="1" fill="#00ffff"/><rect x="3" y="12" width="1" height="1" fill="#000"/><rect x="4" y="12" width="1" height="1" fill="#ffff00"/><rect x="5" y="12" width="1" height="1" fill="#fff"/><rect x="6" y="12" width="1" height="1" fill="#ffff00"/><rect x="7" y="12" width="1" height="1" fill="#fff"/><rect x="8" y="12" width="1" height="1" fill="#ffff00"/><rect x="9" y="12" width="1" height="1" fill="#fff"/><rect x="10" y="12" width="1" height="1" fill="#ffff00"/><rect x="11" y="12" width="1" height="1" fill="#000"/><rect x="16" y="12" width="2" height="1" fill="#000"/><rect x="2" y="13" width="1" height="1" fill="#00ffff"/><rect x="3" y="13" width="1" height="1" fill="#000"/><rect x="4" y="13" width="1" height="1" fill="#fff"/><rect x="5" y="13" width="1" height="1" fill="#ffff00"/><rect x="6" y="13" width="5" height="1" fill="#000"/><rect x="16" y="13" width="2" height="1" fill="#000"/><rect x="2" y="14" width="1" height="1" fill="#00ffff"/><rect x="3" y="14" width="1" height="1" fill="#000"/><rect x="4" y="14" width="1" height="1" fill="#ffff00"/><rect x="5" y="14" width="1" height="1" fill="#fff"/><rect x="6" y="14" width="1" height="1" fill="#ffff00"/><rect x="7" y="14" width="1" height="1" fill="#fff"/><rect x="8" y="14" width="1" height="1" fill="#ffff00"/><rect x="9" y="14" width="1" height="1" fill="#000"/><rect x="2" y="15" width="7" height="1" fill="#000"/><rect x="15" y="15" width="3" height="1" fill="#000"/><rect x="15" y="16" width="3" height="1" fill="#000"/></svg>
<svg class="abs" style="left:276px;top:57px" width="20" height="18" shape-rendering="crispEdges"><rect x="2" y="3" width="16" height="1" fill="#808080"/><rect x="4" y="4" width="1" height="1" fill="#000"/><rect x="3" y="5" width="1" height="1" fill="#808080"/><rect x="4" y="5" width="1" height="1" fill="#000"/><rect x="13" y="5" width="3" height="1" fill="#000"/><rect x="4" y="6" width="1" height="1" fill="#000"/><rect x="13" y="6" width="3" height="1" fill="#0000ff"/><rect x="2" y="7" width="2" height="1" fill="#808080"/><rect x="4" y="7" width="4" height="1" fill="#000"/><rect x="8" y="7" width="4" height="1" fill="#808080"/><rect x="12" y="7" width="1" height="1" fill="#000"/><rect x="13" y="7" width="3" height="1" fill="#0000ff"/><rect x="16" y="7" width="2" height="1" fill="#808080"/><rect x="4" y="8" width="1" height="1" fill="#000"/><rect x="5" y="8" width="4" height="1" fill="#ff0000"/><rect x="13" y="8" width="3" height="1" fill="#0000ff"/><rect x="3" y="9" width="1" height="1" fill="#808080"/><rect x="4" y="9" width="1" height="1" fill="#000"/><rect x="5" y="9" width="4" height="1" fill="#ff0000"/><rect x="13" y="9" width="3" height="1" fill="#0000ff"/><rect x="4" y="10" width="1" height="1" fill="#000"/><rect x="5" y="10" width="4" height="1" fill="#ff0000"/><rect x="9" y="10" width="4" height="1" fill="#000"/><rect x="13" y="10" width="3" height="1" fill="#0000ff"/><rect x="2" y="11" width="2" height="1" fill="#808080"/><rect x="4" y="11" width="1" height="1" fill="#000"/><rect x="5" y="11" width="4" height="1" fill="#ff0000"/><rect x="9" y="11" width="4" height="1" fill="#ffff00"/><rect x="13" y="11" width="3" height="1" fill="#0000ff"/><rect x="16" y="11" width="2" height="1" fill="#808080"/><rect x="4" y="12" width="1" height="1" fill="#000"/><rect x="5" y="12" width="4" height="1" fill="#ff0000"/><rect x="9" y="12" width="4" height="1" fill="#ffff00"/><rect x="13" y="12" width="3" height="1" fill="#0000ff"/><rect x="3" y="13" width="1" height="1" fill="#808080"/><rect x="4" y="13" width="1" height="1" fill="#000"/><rect x="5" y="13" width="4" height="1" fill="#ff0000"/><rect x="9" y="13" width="4" height="1" fill="#ffff00"/><rect x="13" y="13" width="3" height="1" fill="#0000ff"/><rect x="4" y="14" width="1" height="1" fill="#000"/><rect x="5" y="14" width="4" height="1" fill="#ff0000"/><rect x="9" y="14" width="4" height="1" fill="#ffff00"/><rect x="13" y="14" width="3" height="1" fill="#0000ff"/><rect x="2" y="15" width="1" height="1" fill="#808080"/><rect x="3" y="15" width="15" height="1" fill="#000"/><rect x="6" y="17" width="3" height="1" fill="#000"/><rect x="10" y="17" width="3" height="1" fill="#000"/><rect x="14" y="17" width="3" height="1" fill="#000"/></svg>
<svg class="abs" style="left:299px;top:57px" width="20" height="17" shape-rendering="crispEdges"><rect x="2" y="4" width="16" height="1" fill="#000"/><rect x="2" y="5" width="1" height="1" fill="#000"/><rect x="3" y="5" width="2" height="1" fill="#fff8a0"/><rect x="5" y="5" width="10" height="1" fill="#0000ff"/><rect x="15" y="5" width="2" height="1" fill="#fff8a0"/><rect x="17" y="5" width="1" height="1" fill="#000"/><rect x="2" y="6" width="1" height="1" fill="#000"/><rect x="3" y="6" width="14" height="1" fill="#0000ff"/><rect x="17" y="6" width="1" height="1" fill="#000"/><rect x="2" y="7" width="1" height="1" fill="#000"/><rect x="3" y="7" width="14" height="1" fill="#fff"/><rect x="17" y="7" width="1" height="1" fill="#000"/><rect x="2" y="8" width="1" height="1" fill="#000"/><rect x="3" y="8" width="1" height="1" fill="#fff"/><rect x="4" y="8" width="2" height="1" fill="#000"/><rect x="6" y="8" width="1" height="1" fill="#fff"/><rect x="7" y="8" width="2" height="1" fill="#000"/><rect x="9" y="8" width="1" height="1" fill="#fff"/><rect x="10" y="8" width="2" height="1" fill="#000"/><rect x="12" y="8" width="1" height="1" fill="#fff"/><rect x="13" y="8" width="3" height="1" fill="#000"/><rect x="16" y="8" width="1" height="1" fill="#fff"/><rect x="17" y="8" width="1" height="1" fill="#000"/><rect x="2" y="9" width="1" height="1" fill="#000"/><rect x="3" y="9" width="14" height="1" fill="#fff"/><rect x="17" y="9" width="1" height="1" fill="#000"/><rect x="2" y="10" width="1" height="1" fill="#000"/><rect x="3" y="10" width="1" height="1" fill="#fff"/><rect x="4" y="10" width="2" height="1" fill="#000"/><rect x="6" y="10" width="1" height="1" fill="#fff"/><rect x="7" y="10" width="2" height="1" fill="#000"/><rect x="9" y="10" width="1" height="1" fill="#fff"/><rect x="10" y="10" width="2" height="1" fill="#000"/><rect x="12" y="10" width="1" height="1" fill="#fff"/><rect x="13" y="10" width="3" height="1" fill="#000"/><rect x="16" y="10" width="1" height="1" fill="#fff"/><rect x="17" y="10" width="1" height="1" fill="#000"/><rect x="2" y="11" width="1" height="1" fill="#000"/><rect x="3" y="11" width="14" height="1" fill="#fff"/><rect x="17" y="11" width="1" height="1" fill="#000"/><rect x="2" y="12" width="1" height="1" fill="#000"/><rect x="3" y="12" width="1" height="1" fill="#fff"/><rect x="4" y="12" width="2" height="1" fill="#000"/><rect x="6" y="12" width="1" height="1" fill="#fff"/><rect x="7" y="12" width="2" height="1" fill="#000"/><rect x="9" y="12" width="1" height="1" fill="#fff"/><rect x="10" y="12" width="2" height="1" fill="#000"/><rect x="12" y="12" width="1" height="1" fill="#fff"/><rect x="13" y="12" width="3" height="1" fill="#000"/><rect x="16" y="12" width="1" height="1" fill="#fff"/><rect x="17" y="12" width="1" height="1" fill="#000"/><rect x="2" y="13" width="1" height="1" fill="#000"/><rect x="3" y="13" width="14" height="1" fill="#fff"/><rect x="17" y="13" width="1" height="1" fill="#000"/><rect x="2" y="14" width="1" height="1" fill="#000"/><rect x="3" y="14" width="1" height="1" fill="#fff"/><rect x="4" y="14" width="2" height="1" fill="#000"/><rect x="6" y="14" width="1" height="1" fill="#fff"/><rect x="7" y="14" width="2" height="1" fill="#000"/><rect x="9" y="14" width="1" height="1" fill="#fff"/><rect x="10" y="14" width="2" height="1" fill="#000"/><rect x="12" y="14" width="1" height="1" fill="#fff"/><rect x="13" y="14" width="3" height="1" fill="#000"/><rect x="16" y="14" width="1" height="1" fill="#fff"/><rect x="17" y="14" width="1" height="1" fill="#000"/><rect x="2" y="15" width="1" height="1" fill="#000"/><rect x="3" y="15" width="14" height="1" fill="#fff"/><rect x="17" y="15" width="1" height="1" fill="#000"/><rect x="2" y="16" width="16" height="1" fill="#000"/></svg>
<svg class="abs" style="left:322px;top:57px" width="20" height="18" shape-rendering="crispEdges"><rect x="2" y="2" width="7" height="1" fill="#000"/><rect x="2" y="3" width="1" height="1" fill="#000"/><rect x="3" y="3" width="1" height="1" fill="#fff"/><rect x="4" y="3" width="6" height="1" fill="#000"/><rect x="2" y="4" width="1" height="1" fill="#000"/><rect x="3" y="4" width="1" height="1" fill="#fff"/><rect x="4" y="4" width="1" height="1" fill="#000"/><rect x="5" y="4" width="1" height="1" fill="#fff"/><rect x="6" y="4" width="5" height="1" fill="#000"/><rect x="2" y="5" width="1" height="1" fill="#000"/><rect x="3" y="5" width="1" height="1" fill="#fff"/><rect x="4" y="5" width="1" height="1" fill="#000"/><rect x="5" y="5" width="1" height="1" fill="#fff"/><rect x="6" y="5" width="1" height="1" fill="#000"/><rect x="7" y="5" width="1" height="1" fill="#fff"/><rect x="8" y="5" width="4" height="1" fill="#000"/><rect x="2" y="6" width="1" height="1" fill="#000"/><rect x="3" y="6" width="1" height="1" fill="#fff"/><rect x="4" y="6" width="1" height="1" fill="#000"/><rect x="5" y="6" width="1" height="1" fill="#fff"/><rect x="6" y="6" width="1" height="1" fill="#000"/><rect x="7" y="6" width="1" height="1" fill="#fff"/><rect x="8" y="6" width="5" height="1" fill="#000"/><rect x="2" y="7" width="1" height="1" fill="#000"/><rect x="3" y="7" width="1" height="1" fill="#fff"/><rect x="4" y="7" width="1" height="1" fill="#000"/><rect x="5" y="7" width="1" height="1" fill="#fff"/><rect x="6" y="7" width="1" height="1" fill="#000"/><rect x="7" y="7" width="1" height="1" fill="#fff"/><rect x="8" y="7" width="1" height="1" fill="#000"/><rect x="9" y="7" width="4" height="1" fill="#fff"/><rect x="13" y="7" width="2" height="1" fill="#000"/><rect x="2" y="8" width="1" height="1" fill="#000"/><rect x="3" y="8" width="1" height="1" fill="#fff"/><rect x="4" y="8" width="1" height="1" fill="#000"/><rect x="5" y="8" width="1" height="1" fill="#fff"/><rect x="6" y="8" width="1" height="1" fill="#000"/><rect x="7" y="8" width="1" height="1" fill="#fff"/><rect x="8" y="8" width="1" height="1" fill="#000"/><rect x="9" y="8" width="1" height="1" fill="#fff"/><rect x="10" y="8" width="2" height="1" fill="#000"/><rect x="12" y="8" width="1" height="1" fill="#fff"/><rect x="13" y="8" width="1" height="1" fill="#000"/><rect x="14" y="8" width="1" height="1" fill="#fff"/><rect x="15" y="8" width="1" height="1" fill="#000"/><rect x="2" y="9" width="1" height="1" fill="#000"/><rect x="3" y="9" width="1" height="1" fill="#fff"/><rect x="4" y="9" width="1" height="1" fill="#000"/><rect x="5" y="9" width="1" height="1" fill="#fff"/><rect x="6" y="9" width="1" height="1" fill="#000"/><rect x="7" y="9" width="1" height="1" fill="#fff"/><rect x="8" y="9" width="1" height="1" fill="#000"/><rect x="9" y="9" width="5" height="1" fill="#fff"/><rect x="14" y="9" width="3" height="1" fill="#000"/><rect x="2" y="10" width="1" height="1" fill="#000"/><rect x="3" y="10" width="1" height="1" fill="#fff"/><rect x="4" y="10" width="1" height="1" fill="#000"/><rect x="5" y="10" width="1" height="1" fill="#fff"/><rect x="6" y="10" width="1" height="1" fill="#000"/><rect x="7" y="10" width="1" height="1" fill="#fff"/><rect x="8" y="10" width="1" height="1" fill="#000"/><rect x="9" y="10" width="1" height="1" fill="#fff"/><rect x="10" y="10" width="4" height="1" fill="#000"/><rect x="14" y="10" width="2" height="1" fill="#fff"/><rect x="16" y="10" width="1" height="1" fill="#000"/><rect x="2" y="11" width="1" height="1" fill="#000"/><rect x="3" y="11" width="1" height="1" fill="#fff"/><rect x="4" y="11" width="1" height="1" fill="#000"/><rect x="5" y="11" width="1" height="1" fill="#fff"/><rect x="6" y="11" width="1" height="1" fill="#000"/><rect x="7" y="11" width="1" height="1" fill="#fff"/><rect x="8" y="11" width="1" height="1" fill="#000"/><rect x="9" y="11" width="7" height="1" fill="#fff"/><rect x="16" y="11" width="1" height="1" fill="#000"/><rect x="2" y="12" width="1" height="1" fill="#000"/><rect x="3" y="12" width="1" height="1" fill="#fff"/><rect x="4" y="12" width="1" height="1" fill="#000"/><rect x="5" y="12" width="1" height="1" fill="#fff"/><rect x="6" y="12" width="1" height="1" fill="#000"/><rect x="7" y="12" width="1" height="1" fill="#fff"/><rect x="8" y="12" width="1" height="1" fill="#000"/><rect x="9" y="12" width="1" height="1" fill="#fff"/><rect x="10" y="12" width="5" height="1" fill="#000"/><rect x="15" y="12" width="1" height="1" fill="#fff"/><rect x="16" y="12" width="1" height="1" fill="#000"/><rect x="2" y="13" width="1" height="1" fill="#000"/><rect x="3" y="13" width="1" height="1" fill="#fff"/><rect x="4" y="13" width="1" height="1" fill="#000"/><rect x="5" y="13" width="1" height="1" fill="#fff"/><rect x="6" y="13" width="1" height="1" fill="#000"/><rect x="7" y="13" width="1" height="1" fill="#fff"/><rect x="8" y="13" width="1" height="1" fill="#000"/><rect x="9" y="13" width="7" height="1" fill="#fff"/><rect x="16" y="13" width="1" height="1" fill="#000"/><rect x="2" y="14" width="3" height="1" fill="#000"/><rect x="5" y="14" width="1" height="1" fill="#fff"/><rect x="6" y="14" width="1" height="1" fill="#000"/><rect x="7" y="14" width="1" height="1" fill="#fff"/><rect x="8" y="14" width="1" height="1" fill="#000"/><rect x="9" y="14" width="1" height="1" fill="#fff"/><rect x="10" y="14" width="4" height="1" fill="#000"/><rect x="14" y="14" width="2" height="1" fill="#fff"/><rect x="16" y="14" width="1" height="1" fill="#000"/><rect x="4" y="15" width="3" height="1" fill="#000"/><rect x="7" y="15" width="1" height="1" fill="#fff"/><rect x="8" y="15" width="1" height="1" fill="#000"/><rect x="9" y="15" width="7" height="1" fill="#fff"/><rect x="16" y="15" width="1" height="1" fill="#000"/><rect x="6" y="16" width="3" height="1" fill="#000"/><rect x="9" y="16" width="7" height="1" fill="#fff"/><rect x="16" y="16" width="1" height="1" fill="#000"/><rect x="8" y="17" width="9" height="1" fill="#000"/></svg>
<svg class="abs" style="left:345px;top:57px;opacity:0.6" width="20" height="16" shape-rendering="crispEdges"><rect x="4" y="2" width="1" height="1" fill="#808080"/><rect x="5" y="2" width="1" height="1" fill="#c0c0c0"/><rect x="6" y="2" width="1" height="1" fill="#ff0000"/><rect x="7" y="2" width="2" height="1" fill="#fff8a0"/><rect x="9" y="2" width="1" height="1" fill="#00ff00"/><rect x="10" y="2" width="4" height="1" fill="#fff8a0"/><rect x="14" y="2" width="1" height="1" fill="#c0c0c0"/><rect x="15" y="2" width="1" height="1" fill="#808080"/><rect x="4" y="3" width="1" height="1" fill="#000"/><rect x="5" y="3" width="1" height="1" fill="#404040"/><rect x="6" y="3" width="1" height="1" fill="#f0d0a0"/><rect x="7" y="3" width="6" height="1" fill="#fff8a0"/><rect x="13" y="3" width="1" height="1" fill="#f0d0a0"/><rect x="14" y="3" width="1" height="1" fill="#0000ff"/><rect x="15" y="3" width="1" height="1" fill="#000"/><rect x="4" y="4" width="1" height="1" fill="#808080"/><rect x="5" y="4" width="1" height="1" fill="#fff"/><rect x="6" y="4" width="1" height="1" fill="#fff8a0"/><rect x="7" y="4" width="6" height="1" fill="#f0d0a0"/><rect x="13" y="4" width="1" height="1" fill="#fff8a0"/><rect x="14" y="4" width="1" height="1" fill="#fff"/><rect x="15" y="4" width="1" height="1" fill="#808080"/><rect x="4" y="5" width="1" height="1" fill="#000"/><rect x="5" y="5" width="9" height="1" fill="#404040"/><rect x="14" y="5" width="2" height="1" fill="#000"/><rect x="4" y="6" width="1" height="1" fill="#808080"/><rect x="5" y="6" width="1" height="1" fill="#fff"/><rect x="6" y="6" width="8" height="1" fill="#fff8a0"/><rect x="14" y="6" width="1" height="1" fill="#fff"/><rect x="15" y="6" width="1" height="1" fill="#808080"/><rect x="2" y="7" width="1" height="1" fill="#808080"/><rect x="4" y="7" width="1" height="1" fill="#000"/><rect x="5" y="7" width="1" height="1" fill="#404040"/><rect x="6" y="7" width="2" height="1" fill="#fff8a0"/><rect x="8" y="7" width="1" height="1" fill="#f0d0a0"/><rect x="9" y="7" width="5" height="1" fill="#fff8a0"/><rect x="14" y="7" width="1" height="1" fill="#404040"/><rect x="15" y="7" width="1" height="1" fill="#000"/><rect x="17" y="7" width="1" height="1" fill="#808080"/><rect x="4" y="8" width="1" height="1" fill="#808080"/><rect x="5" y="8" width="1" height="1" fill="#fff"/><rect x="6" y="8" width="1" height="1" fill="#fff8a0"/><rect x="7" y="8" width="1" height="1" fill="#00ff00"/><rect x="8" y="8" width="2" height="1" fill="#fff8a0"/><rect x="10" y="8" width="1" height="1" fill="#f0d0a0"/><rect x="11" y="8" width="3" height="1" fill="#fff8a0"/><rect x="14" y="8" width="1" height="1" fill="#fff"/><rect x="15" y="8" width="1" height="1" fill="#808080"/><rect x="4" y="9" width="1" height="1" fill="#000"/><rect x="5" y="9" width="1" height="1" fill="#404040"/><rect x="6" y="9" width="8" height="1" fill="#fff8a0"/><rect x="14" y="9" width="1" height="1" fill="#404040"/><rect x="15" y="9" width="1" height="1" fill="#000"/><rect x="4" y="10" width="1" height="1" fill="#808080"/><rect x="5" y="10" width="1" height="1" fill="#fff"/><rect x="6" y="10" width="8" height="1" fill="#fff8a0"/><rect x="14" y="10" width="1" height="1" fill="#fff"/><rect x="15" y="10" width="1" height="1" fill="#808080"/><rect x="4" y="11" width="1" height="1" fill="#000"/><rect x="5" y="11" width="1" height="1" fill="#404040"/><rect x="6" y="11" width="8" height="1" fill="#f0d0a0"/><rect x="14" y="11" width="1" height="1" fill="#00ff00"/><rect x="15" y="11" width="1" height="1" fill="#000"/><rect x="4" y="12" width="1" height="1" fill="#808080"/><rect x="5" y="12" width="1" height="1" fill="#fff"/><rect x="6" y="12" width="9" height="1" fill="#404040"/><rect x="15" y="12" width="1" height="1" fill="#808080"/><rect x="2" y="13" width="1" height="1" fill="#808080"/><rect x="4" y="13" width="1" height="1" fill="#000"/><rect x="5" y="13" width="1" height="1" fill="#404040"/><rect x="6" y="13" width="8" height="1" fill="#fff8a0"/><rect x="14" y="13" width="1" height="1" fill="#404040"/><rect x="15" y="13" width="1" height="1" fill="#000"/><rect x="17" y="13" width="1" height="1" fill="#808080"/><rect x="4" y="14" width="1" height="1" fill="#c0c0c0"/><rect x="5" y="14" width="1" height="1" fill="#fff"/><rect x="6" y="14" width="3" height="1" fill="#fff8a0"/><rect x="9" y="14" width="1" height="1" fill="#f0d0a0"/><rect x="10" y="14" width="4" height="1" fill="#fff8a0"/><rect x="14" y="14" width="1" height="1" fill="#fff"/><rect x="15" y="14" width="1" height="1" fill="#c0c0c0"/><rect x="5" y="15" width="1" height="1" fill="#808080"/><rect x="6" y="15" width="1" height="1" fill="#0000ff"/><rect x="7" y="15" width="5" height="1" fill="#fff8a0"/><rect x="12" y="15" width="1" height="1" fill="#ff0000"/><rect x="13" y="15" width="1" height="1" fill="#fff8a0"/><rect x="14" y="15" width="1" height="1" fill="#808080"/></svg>
<svg class="abs" style="left:368px;top:57px" width="20" height="18" shape-rendering="crispEdges"><rect x="5" y="2" width="7" height="1" fill="#000"/><rect x="5" y="3" width="1" height="1" fill="#000"/><rect x="6" y="3" width="5" height="1" fill="#fff"/><rect x="11" y="3" width="2" height="1" fill="#000"/><rect x="5" y="4" width="1" height="1" fill="#000"/><rect x="6" y="4" width="1" height="1" fill="#fff"/><rect x="7" y="4" width="2" height="1" fill="#000"/><rect x="9" y="4" width="2" height="1" fill="#fff"/><rect x="11" y="4" width="1" height="1" fill="#000"/><rect x="12" y="4" width="1" height="1" fill="#fff"/><rect x="13" y="4" width="1" height="1" fill="#000"/><rect x="5" y="5" width="1" height="1" fill="#000"/><rect x="6" y="5" width="6" height="1" fill="#fff"/><rect x="12" y="5" width="3" height="1" fill="#000"/><rect x="5" y="6" width="1" height="1" fill="#000"/><rect x="6" y="6" width="1" height="1" fill="#fff"/><rect x="7" y="6" width="2" height="1" fill="#000"/><rect x="9" y="6" width="5" height="1" fill="#fff"/><rect x="14" y="6" width="1" height="1" fill="#000"/><rect x="5" y="7" width="1" height="1" fill="#000"/><rect x="6" y="7" width="8" height="1" fill="#fff"/><rect x="14" y="7" width="1" height="1" fill="#000"/><rect x="5" y="8" width="1" height="1" fill="#000"/><rect x="6" y="8" width="1" height="1" fill="#fff"/><rect x="7" y="8" width="4" height="1" fill="#000"/><rect x="11" y="8" width="1" height="1" fill="#fff"/><rect x="12" y="8" width="1" height="1" fill="#000"/><rect x="13" y="8" width="1" height="1" fill="#fff"/><rect x="14" y="8" width="1" height="1" fill="#000"/><rect x="5" y="9" width="1" height="1" fill="#000"/><rect x="6" y="9" width="8" height="1" fill="#fff"/><rect x="14" y="9" width="1" height="1" fill="#000"/><rect x="2" y="10" width="16" height="1" fill="#000"/><rect x="2" y="11" width="1" height="1" fill="#000"/><rect x="3" y="11" width="1" height="1" fill="#fff"/><rect x="4" y="11" width="1" height="1" fill="#c0c0c0"/><rect x="5" y="11" width="1" height="1" fill="#fff"/><rect x="6" y="11" width="1" height="1" fill="#c0c0c0"/><rect x="7" y="11" width="1" height="1" fill="#fff"/><rect x="8" y="11" width="1" height="1" fill="#c0c0c0"/><rect x="9" y="11" width="1" height="1" fill="#fff"/><rect x="10" y="11" width="1" height="1" fill="#c0c0c0"/><rect x="11" y="11" width="1" height="1" fill="#fff"/><rect x="12" y="11" width="1" height="1" fill="#c0c0c0"/><rect x="13" y="11" width="1" height="1" fill="#fff"/><rect x="14" y="11" width="1" height="1" fill="#c0c0c0"/><rect x="15" y="11" width="2" height="1" fill="#fff"/><rect x="17" y="11" width="1" height="1" fill="#000"/><rect x="2" y="12" width="1" height="1" fill="#000"/><rect x="3" y="12" width="1" height="1" fill="#c0c0c0"/><rect x="4" y="12" width="1" height="1" fill="#fff"/><rect x="5" y="12" width="1" height="1" fill="#c0c0c0"/><rect x="6" y="12" width="1" height="1" fill="#fff"/><rect x="7" y="12" width="1" height="1" fill="#c0c0c0"/><rect x="8" y="12" width="1" height="1" fill="#fff"/><rect x="9" y="12" width="1" height="1" fill="#c0c0c0"/><rect x="10" y="12" width="1" height="1" fill="#fff"/><rect x="11" y="12" width="1" height="1" fill="#c0c0c0"/><rect x="12" y="12" width="1" height="1" fill="#fff"/><rect x="13" y="12" width="1" height="1" fill="#c0c0c0"/><rect x="14" y="12" width="1" height="1" fill="#fff"/><rect x="15" y="12" width="1" height="1" fill="#ff0000"/><rect x="16" y="12" width="1" height="1" fill="#fff"/><rect x="17" y="12" width="1" height="1" fill="#000"/><rect x="2" y="13" width="1" height="1" fill="#000"/><rect x="3" y="13" width="1" height="1" fill="#fff"/><rect x="4" y="13" width="1" height="1" fill="#c0c0c0"/><rect x="5" y="13" width="1" height="1" fill="#fff"/><rect x="6" y="13" width="1" height="1" fill="#c0c0c0"/><rect x="7" y="13" width="1" height="1" fill="#fff"/><rect x="8" y="13" width="1" height="1" fill="#c0c0c0"/><rect x="9" y="13" width="1" height="1" fill="#fff"/><rect x="10" y="13" width="1" height="1" fill="#c0c0c0"/><rect x="11" y="13" width="1" height="1" fill="#fff"/><rect x="12" y="13" width="1" height="1" fill="#c0c0c0"/><rect x="13" y="13" width="1" height="1" fill="#fff"/><rect x="14" y="13" width="1" height="1" fill="#c0c0c0"/><rect x="15" y="13" width="2" height="1" fill="#fff"/><rect x="17" y="13" width="1" height="1" fill="#000"/><rect x="2" y="14" width="16" height="1" fill="#000"/><rect x="2" y="15" width="1" height="1" fill="#000"/><rect x="3" y="15" width="14" height="1" fill="#dcdcdc"/><rect x="17" y="15" width="1" height="1" fill="#000"/><rect x="2" y="16" width="1" height="1" fill="#000"/><rect x="3" y="16" width="14" height="1" fill="#dcdcdc"/><rect x="17" y="16" width="1" height="1" fill="#000"/><rect x="3" y="17" width="14" height="1" fill="#000"/></svg>
<svg class="abs" style="left:398px;top:57px" width="20" height="18" shape-rendering="crispEdges"><rect x="7" y="3" width="4" height="1" fill="#000"/><rect x="6" y="4" width="1" height="1" fill="#000"/><rect x="7" y="4" width="4" height="1" fill="#808080"/><rect x="11" y="4" width="1" height="1" fill="#000"/><rect x="5" y="5" width="1" height="1" fill="#000"/><rect x="6" y="5" width="1" height="1" fill="#808080"/><rect x="7" y="5" width="4" height="1" fill="#000"/><rect x="11" y="5" width="1" height="1" fill="#808080"/><rect x="12" y="5" width="1" height="1" fill="#000"/><rect x="5" y="6" width="1" height="1" fill="#000"/><rect x="6" y="6" width="1" height="1" fill="#808080"/><rect x="7" y="6" width="1" height="1" fill="#000"/><rect x="8" y="6" width="2" height="1" fill="#fff"/><rect x="10" y="6" width="1" height="1" fill="#000"/><rect x="11" y="6" width="1" height="1" fill="#808080"/><rect x="12" y="6" width="1" height="1" fill="#000"/><rect x="5" y="7" width="1" height="1" fill="#000"/><rect x="6" y="7" width="1" height="1" fill="#808080"/><rect x="7" y="7" width="1" height="1" fill="#000"/><rect x="8" y="7" width="2" height="1" fill="#fff"/><rect x="10" y="7" width="1" height="1" fill="#000"/><rect x="11" y="7" width="1" height="1" fill="#808080"/><rect x="12" y="7" width="1" height="1" fill="#000"/><rect x="5" y="8" width="1" height="1" fill="#000"/><rect x="6" y="8" width="1" height="1" fill="#808080"/><rect x="7" y="8" width="1" height="1" fill="#000"/><rect x="8" y="8" width="2" height="1" fill="#fff"/><rect x="10" y="8" width="1" height="1" fill="#000"/><rect x="11" y="8" width="1" height="1" fill="#808080"/><rect x="12" y="8" width="1" height="1" fill="#000"/><rect x="4" y="9" width="10" height="1" fill="#000"/><rect x="3" y="10" width="1" height="1" fill="#000"/><rect x="4" y="10" width="10" height="1" fill="#c0c0c0"/><rect x="14" y="10" width="1" height="1" fill="#000"/><rect x="3" y="11" width="1" height="1" fill="#000"/><rect x="4" y="11" width="4" height="1" fill="#808080"/><rect x="8" y="11" width="2" height="1" fill="#000"/><rect x="10" y="11" width="4" height="1" fill="#808080"/><rect x="14" y="11" width="1" height="1" fill="#000"/><rect x="3" y="12" width="1" height="1" fill="#000"/><rect x="4" y="12" width="4" height="1" fill="#c0c0c0"/><rect x="8" y="12" width="2" height="1" fill="#000"/><rect x="10" y="12" width="4" height="1" fill="#c0c0c0"/><rect x="14" y="12" width="1" height="1" fill="#000"/><rect x="3" y="13" width="1" height="1" fill="#000"/><rect x="4" y="13" width="4" height="1" fill="#808080"/><rect x="8" y="13" width="2" height="1" fill="#404040"/><rect x="10" y="13" width="4" height="1" fill="#808080"/><rect x="14" y="13" width="1" height="1" fill="#000"/><rect x="3" y="14" width="1" height="1" fill="#000"/><rect x="4" y="14" width="4" height="1" fill="#c0c0c0"/><rect x="8" y="14" width="2" height="1" fill="#404040"/><rect x="10" y="14" width="4" height="1" fill="#c0c0c0"/><rect x="14" y="14" width="1" height="1" fill="#000"/><rect x="4" y="15" width="1" height="1" fill="#000"/><rect x="5" y="15" width="3" height="1" fill="#808080"/><rect x="8" y="15" width="2" height="1" fill="#404040"/><rect x="10" y="15" width="3" height="1" fill="#808080"/><rect x="13" y="15" width="1" height="1" fill="#000"/><rect x="5" y="16" width="2" height="1" fill="#000"/><rect x="7" y="16" width="4" height="1" fill="#c0c0c0"/><rect x="11" y="16" width="2" height="1" fill="#000"/><rect x="7" y="17" width="4" height="1" fill="#000"/></svg>
<svg class="abs" style="left:420px;top:57px" width="20" height="16" shape-rendering="crispEdges"><rect x="3" y="2" width="6" height="1" fill="#000"/><rect x="2" y="3" width="1" height="1" fill="#000"/><rect x="3" y="3" width="2" height="1" fill="#ffff00"/><rect x="5" y="3" width="1" height="1" fill="#fff"/><rect x="6" y="3" width="3" height="1" fill="#ffff00"/><rect x="9" y="3" width="1" height="1" fill="#000"/><rect x="2" y="4" width="1" height="1" fill="#000"/><rect x="3" y="4" width="1" height="1" fill="#fff"/><rect x="4" y="4" width="5" height="1" fill="#ffff00"/><rect x="9" y="4" width="4" height="1" fill="#000"/><rect x="2" y="5" width="1" height="1" fill="#000"/><rect x="3" y="5" width="1" height="1" fill="#ffff00"/><rect x="4" y="5" width="1" height="1" fill="#fff"/><rect x="5" y="5" width="1" height="1" fill="#ffff00"/><rect x="6" y="5" width="1" height="1" fill="#fff"/><rect x="7" y="5" width="1" height="1" fill="#ffff00"/><rect x="8" y="5" width="1" height="1" fill="#fff"/><rect x="9" y="5" width="1" height="1" fill="#ffff00"/><rect x="10" y="5" width="1" height="1" fill="#fff"/><rect x="11" y="5" width="2" height="1" fill="#ffff00"/><rect x="13" y="5" width="1" height="1" fill="#000"/><rect x="2" y="6" width="1" height="1" fill="#000"/><rect x="3" y="6" width="1" height="1" fill="#fff"/><rect x="4" y="6" width="2" height="1" fill="#ffff00"/><rect x="6" y="6" width="1" height="1" fill="#fff"/><rect x="7" y="6" width="5" height="1" fill="#ffff00"/><rect x="12" y="6" width="1" height="1" fill="#fff"/><rect x="13" y="6" width="1" height="1" fill="#000"/><rect x="2" y="7" width="1" height="1" fill="#000"/><rect x="3" y="7" width="2" height="1" fill="#ffff00"/><rect x="5" y="7" width="1" height="1" fill="#fff"/><rect x="6" y="7" width="9" height="1" fill="#000"/><rect x="2" y="8" width="1" height="1" fill="#000"/><rect x="3" y="8" width="1" height="1" fill="#fff"/><rect x="4" y="8" width="1" height="1" fill="#ffff00"/><rect x="5" y="8" width="1" height="1" fill="#000"/><rect x="6" y="8" width="1" height="1" fill="#fff"/><rect x="7" y="8" width="1" height="1" fill="#ffff00"/><rect x="8" y="8" width="1" height="1" fill="#fff"/><rect x="9" y="8" width="3" height="1" fill="#ffff00"/><rect x="12" y="8" width="1" height="1" fill="#fff"/><rect x="13" y="8" width="1" height="1" fill="#ffff00"/><rect x="14" y="8" width="1" height="1" fill="#000"/><rect x="2" y="9" width="1" height="1" fill="#000"/><rect x="3" y="9" width="1" height="1" fill="#ffff00"/><rect x="4" y="9" width="1" height="1" fill="#fff"/><rect x="5" y="9" width="1" height="1" fill="#000"/><rect x="6" y="9" width="2" height="1" fill="#ffff00"/><rect x="8" y="9" width="1" height="1" fill="#fff"/><rect x="9" y="9" width="5" height="1" fill="#ffff00"/><rect x="14" y="9" width="2" height="1" fill="#000"/><rect x="2" y="10" width="3" height="1" fill="#000"/><rect x="5" y="10" width="1" height="1" fill="#fff"/><rect x="6" y="10" width="5" height="1" fill="#ffff00"/><rect x="11" y="10" width="1" height="1" fill="#fff"/><rect x="12" y="10" width="1" height="1" fill="#ffff00"/><rect x="13" y="10" width="1" height="1" fill="#fff"/><rect x="14" y="10" width="2" height="1" fill="#ffff00"/><rect x="16" y="10" width="1" height="1" fill="#000"/><rect x="4" y="11" width="1" height="1" fill="#000"/><rect x="5" y="11" width="2" height="1" fill="#ffff00"/><rect x="7" y="11" width="11" height="1" fill="#000"/><rect x="4" y="12" width="1" height="1" fill="#000"/><rect x="5" y="12" width="1" height="1" fill="#ffff00"/><rect x="6" y="12" width="1" height="1" fill="#000"/><rect x="7" y="12" width="1" height="1" fill="#808000"/><rect x="8" y="12" width="1" height="1" fill="#ffff00"/><rect x="9" y="12" width="1" height="1" fill="#808000"/><rect x="10" y="12" width="1" height="1" fill="#ffff00"/><rect x="11" y="12" width="1" height="1" fill="#808000"/><rect x="12" y="12" width="1" height="1" fill="#ffff00"/><rect x="13" y="12" width="1" height="1" fill="#808000"/><rect x="14" y="12" width="1" height="1" fill="#ffff00"/><rect x="15" y="12" width="1" height="1" fill="#808000"/><rect x="16" y="12" width="1" height="1" fill="#ffff00"/><rect x="17" y="12" width="1" height="1" fill="#000"/><rect x="4" y="13" width="2" height="1" fill="#000"/><rect x="6" y="13" width="11" height="1" fill="#ffff00"/><rect x="17" y="13" width="1" height="1" fill="#000"/><rect x="5" y="14" width="1" height="1" fill="#000"/><rect x="6" y="14" width="10" height="1" fill="#ffff00"/><rect x="16" y="14" width="1" height="1" fill="#000"/><rect x="5" y="15" width="11" height="1" fill="#000"/></svg>
<svg class="abs" style="left:443px;top:57px" width="20" height="18" shape-rendering="crispEdges"><rect x="2" y="2" width="7" height="1" fill="#000"/><rect x="2" y="3" width="1" height="1" fill="#000"/><rect x="3" y="3" width="5" height="1" fill="#fff"/><rect x="8" y="3" width="2" height="1" fill="#000"/><rect x="11" y="3" width="5" height="1" fill="#ff0000"/><rect x="2" y="4" width="1" height="1" fill="#000"/><rect x="3" y="4" width="1" height="1" fill="#fff"/><rect x="4" y="4" width="2" height="1" fill="#000"/><rect x="6" y="4" width="2" height="1" fill="#fff"/><rect x="8" y="4" width="1" height="1" fill="#000"/><rect x="9" y="4" width="1" height="1" fill="#fff"/><rect x="10" y="4" width="1" height="1" fill="#000"/><rect x="12" y="4" width="4" height="1" fill="#ff0000"/><rect x="2" y="5" width="1" height="1" fill="#000"/><rect x="3" y="5" width="5" height="1" fill="#fff"/><rect x="8" y="5" width="3" height="1" fill="#000"/><rect x="12" y="5" width="4" height="1" fill="#ff0000"/><rect x="2" y="6" width="1" height="1" fill="#000"/><rect x="3" y="6" width="1" height="1" fill="#fff"/><rect x="4" y="6" width="2" height="1" fill="#000"/><rect x="6" y="6" width="4" height="1" fill="#fff"/><rect x="10" y="6" width="1" height="1" fill="#000"/><rect x="12" y="6" width="4" height="1" fill="#ff0000"/><rect x="2" y="7" width="1" height="1" fill="#000"/><rect x="3" y="7" width="7" height="1" fill="#fff"/><rect x="10" y="7" width="1" height="1" fill="#000"/><rect x="11" y="7" width="7" height="1" fill="#ff0000"/><rect x="2" y="8" width="1" height="1" fill="#000"/><rect x="3" y="8" width="1" height="1" fill="#fff"/><rect x="4" y="8" width="4" height="1" fill="#000"/><rect x="8" y="8" width="1" height="1" fill="#fff"/><rect x="9" y="8" width="1" height="1" fill="#000"/><rect x="10" y="8" width="1" height="1" fill="#fff"/><rect x="11" y="8" width="6" height="1" fill="#ff0000"/><rect x="2" y="9" width="1" height="1" fill="#000"/><rect x="3" y="9" width="7" height="1" fill="#fff"/><rect x="10" y="9" width="2" height="1" fill="#000"/><rect x="12" y="9" width="4" height="1" fill="#ff0000"/><rect x="2" y="10" width="1" height="1" fill="#000"/><rect x="3" y="10" width="1" height="1" fill="#fff"/><rect x="4" y="10" width="2" height="1" fill="#000"/><rect x="6" y="10" width="1" height="1" fill="#fff"/><rect x="7" y="10" width="4" height="1" fill="#000"/><rect x="11" y="10" width="2" height="1" fill="#0000ff"/><rect x="13" y="10" width="2" height="1" fill="#ff0000"/><rect x="15" y="10" width="2" height="1" fill="#0000ff"/><rect x="17" y="10" width="1" height="1" fill="#000"/><rect x="2" y="11" width="1" height="1" fill="#000"/><rect x="3" y="11" width="7" height="1" fill="#fff"/><rect x="10" y="11" width="1" height="1" fill="#000"/><rect x="11" y="11" width="6" height="1" fill="#fff"/><rect x="17" y="11" width="1" height="1" fill="#000"/><rect x="2" y="12" width="9" height="1" fill="#000"/><rect x="11" y="12" width="6" height="1" fill="#fff"/><rect x="17" y="12" width="1" height="1" fill="#000"/><rect x="10" y="13" width="8" height="1" fill="#000"/><rect x="10" y="14" width="8" height="1" fill="#000"/><rect x="10" y="15" width="2" height="1" fill="#000"/><rect x="12" y="15" width="2" height="1" fill="#c0c0c0"/><rect x="14" y="15" width="1" height="1" fill="#fff"/><rect x="15" y="15" width="1" height="1" fill="#c0c0c0"/><rect x="16" y="15" width="2" height="1" fill="#000"/><rect x="10" y="16" width="2" height="1" fill="#000"/><rect x="12" y="16" width="1" height="1" fill="#c0c0c0"/><rect x="13" y="16" width="2" height="1" fill="#000"/><rect x="15" y="16" width="1" height="1" fill="#c0c0c0"/><rect x="16" y="16" width="2" height="1" fill="#000"/><rect x="10" y="17" width="2" height="1" fill="#000"/><rect x="12" y="17" width="1" height="1" fill="#c0c0c0"/><rect x="13" y="17" width="2" height="1" fill="#000"/><rect x="15" y="17" width="1" height="1" fill="#c0c0c0"/><rect x="16" y="17" width="2" height="1" fill="#000"/></svg>
<svg class="abs" style="left:472px;top:57px" width="20" height="18" shape-rendering="crispEdges"><rect x="5" y="2" width="10" height="1" fill="#2a6bc4"/><rect x="4" y="3" width="1" height="1" fill="#2a6bc4"/><rect x="5" y="3" width="10" height="1" fill="#4a90d9"/><rect x="15" y="3" width="1" height="1" fill="#2a6bc4"/><rect x="4" y="4" width="1" height="1" fill="#2a6bc4"/><rect x="5" y="4" width="10" height="1" fill="#a8d8f0"/><rect x="15" y="4" width="1" height="1" fill="#2a6bc4"/><rect x="4" y="5" width="1" height="1" fill="#2a6bc4"/><rect x="5" y="5" width="10" height="1" fill="#a8d8f0"/><rect x="15" y="5" width="1" height="1" fill="#2a6bc4"/><rect x="4" y="6" width="1" height="1" fill="#2a6bc4"/><rect x="5" y="6" width="10" height="1" fill="#4a90d9"/><rect x="15" y="6" width="1" height="1" fill="#2a6bc4"/><rect x="4" y="7" width="1" height="1" fill="#2a6bc4"/><rect x="5" y="7" width="10" height="1" fill="#f0f8ff"/><rect x="15" y="7" width="1" height="1" fill="#2a6bc4"/><rect x="4" y="8" width="1" height="1" fill="#2a6bc4"/><rect x="5" y="8" width="6" height="1" fill="#f0f8ff"/><rect x="11" y="8" width="2" height="1" fill="#ff0000"/><rect x="13" y="8" width="2" height="1" fill="#f0f8ff"/><rect x="15" y="8" width="1" height="1" fill="#2a6bc4"/><rect x="4" y="9" width="1" height="1" fill="#2a6bc4"/><rect x="5" y="9" width="1" height="1" fill="#f0f8ff"/><rect x="6" y="9" width="2" height="1" fill="#2a6bc4"/><rect x="8" y="9" width="1" height="1" fill="#f0f8ff"/><rect x="9" y="9" width="2" height="1" fill="#2a6bc4"/><rect x="11" y="9" width="1" height="1" fill="#f0f8ff"/><rect x="12" y="9" width="2" height="1" fill="#ff0000"/><rect x="14" y="9" width="1" height="1" fill="#f0f8ff"/><rect x="15" y="9" width="1" height="1" fill="#2a6bc4"/><rect x="4" y="10" width="1" height="1" fill="#2a6bc4"/><rect x="5" y="10" width="10" height="1" fill="#f0f8ff"/><rect x="15" y="10" width="1" height="1" fill="#2a6bc4"/><rect x="4" y="11" width="1" height="1" fill="#2a6bc4"/><rect x="5" y="11" width="10" height="1" fill="#f0f8ff"/><rect x="15" y="11" width="1" height="1" fill="#2a6bc4"/><rect x="4" y="12" width="1" height="1" fill="#2a6bc4"/><rect x="5" y="12" width="1" height="1" fill="#f0f8ff"/><rect x="6" y="12" width="2" height="1" fill="#2a6bc4"/><rect x="8" y="12" width="1" height="1" fill="#f0f8ff"/><rect x="9" y="12" width="2" height="1" fill="#2a6bc4"/><rect x="11" y="12" width="1" height="1" fill="#f0f8ff"/><rect x="12" y="12" width="2" height="1" fill="#2a6bc4"/><rect x="14" y="12" width="1" height="1" fill="#f0f8ff"/><rect x="15" y="12" width="1" height="1" fill="#2a6bc4"/><rect x="4" y="13" width="1" height="1" fill="#2a6bc4"/><rect x="5" y="13" width="10" height="1" fill="#f0f8ff"/><rect x="15" y="13" width="1" height="1" fill="#2a6bc4"/><rect x="4" y="14" width="1" height="1" fill="#2a6bc4"/><rect x="5" y="14" width="10" height="1" fill="#f0f8ff"/><rect x="15" y="14" width="1" height="1" fill="#2a6bc4"/><rect x="4" y="15" width="1" height="1" fill="#2a6bc4"/><rect x="5" y="15" width="1" height="1" fill="#f0f8ff"/><rect x="6" y="15" width="2" height="1" fill="#2a6bc4"/><rect x="8" y="15" width="1" height="1" fill="#f0f8ff"/><rect x="9" y="15" width="2" height="1" fill="#2a6bc4"/><rect x="11" y="15" width="1" height="1" fill="#f0f8ff"/><rect x="12" y="15" width="2" height="1" fill="#2a6bc4"/><rect x="14" y="15" width="1" height="1" fill="#f0f8ff"/><rect x="15" y="15" width="1" height="1" fill="#2a6bc4"/><rect x="4" y="16" width="1" height="1" fill="#2a6bc4"/><rect x="5" y="16" width="10" height="1" fill="#f0f8ff"/><rect x="15" y="16" width="1" height="1" fill="#2a6bc4"/><rect x="5" y="17" width="10" height="1" fill="#2a6bc4"/></svg>
<svg class="abs" style="left:495px;top:57px" width="20" height="17" shape-rendering="crispEdges"><rect x="8" y="2" width="1" height="1" fill="#ffff00"/><rect x="9" y="2" width="1" height="1" fill="#fff"/><rect x="10" y="2" width="1" height="1" fill="#ffff00"/><rect x="11" y="2" width="1" height="1" fill="#fff"/><rect x="5" y="3" width="1" height="1" fill="#ffff00"/><rect x="6" y="3" width="1" height="1" fill="#fff"/><rect x="7" y="3" width="1" height="1" fill="#ffff00"/><rect x="8" y="3" width="1" height="1" fill="#fff"/><rect x="9" y="3" width="1" height="1" fill="#ffff00"/><rect x="10" y="3" width="1" height="1" fill="#fff"/><rect x="11" y="3" width="1" height="1" fill="#ffff00"/><rect x="12" y="3" width="1" height="1" fill="#fff"/><rect x="13" y="3" width="1" height="1" fill="#ffff00"/><rect x="4" y="4" width="1" height="1" fill="#ffff00"/><rect x="5" y="4" width="1" height="1" fill="#fff"/><rect x="6" y="4" width="1" height="1" fill="#ffff00"/><rect x="7" y="4" width="5" height="1" fill="#ff0000"/><rect x="12" y="4" width="1" height="1" fill="#fff"/><rect x="13" y="4" width="1" height="1" fill="#ffff00"/><rect x="14" y="4" width="1" height="1" fill="#fff"/><rect x="3" y="5" width="1" height="1" fill="#ffff00"/><rect x="4" y="5" width="1" height="1" fill="#fff"/><rect x="5" y="5" width="1" height="1" fill="#ffff00"/><rect x="6" y="5" width="7" height="1" fill="#ff0000"/><rect x="13" y="5" width="1" height="1" fill="#ffff00"/><rect x="14" y="5" width="1" height="1" fill="#fff"/><rect x="15" y="5" width="1" height="1" fill="#ffff00"/><rect x="2" y="6" width="1" height="1" fill="#ffff00"/><rect x="3" y="6" width="1" height="1" fill="#fff"/><rect x="4" y="6" width="1" height="1" fill="#ffff00"/><rect x="5" y="6" width="1" height="1" fill="#fff"/><rect x="6" y="6" width="2" height="1" fill="#ff0000"/><rect x="8" y="6" width="1" height="1" fill="#ffff00"/><rect x="9" y="6" width="1" height="1" fill="#fff"/><rect x="10" y="6" width="1" height="1" fill="#ffff00"/><rect x="11" y="6" width="3" height="1" fill="#ff0000"/><rect x="14" y="6" width="1" height="1" fill="#ffff00"/><rect x="15" y="6" width="1" height="1" fill="#fff"/><rect x="16" y="6" width="1" height="1" fill="#ffff00"/><rect x="2" y="7" width="1" height="1" fill="#fff"/><rect x="3" y="7" width="1" height="1" fill="#ffff00"/><rect x="4" y="7" width="1" height="1" fill="#fff"/><rect x="5" y="7" width="1" height="1" fill="#ffff00"/><rect x="6" y="7" width="2" height="1" fill="#ff0000"/><rect x="8" y="7" width="1" height="1" fill="#ffff00"/><rect x="9" y="7" width="1" height="1" fill="#fff"/><rect x="10" y="7" width="1" height="1" fill="#ffff00"/><rect x="11" y="7" width="3" height="1" fill="#ff0000"/><rect x="14" y="7" width="1" height="1" fill="#ffff00"/><rect x="15" y="7" width="1" height="1" fill="#fff"/><rect x="16" y="7" width="1" height="1" fill="#ffff00"/><rect x="17" y="7" width="1" height="1" fill="#fff"/><rect x="2" y="8" width="1" height="1" fill="#ffff00"/><rect x="3" y="8" width="1" height="1" fill="#fff"/><rect x="4" y="8" width="1" height="1" fill="#ffff00"/><rect x="5" y="8" width="1" height="1" fill="#fff"/><rect x="6" y="8" width="1" height="1" fill="#ffff00"/><rect x="7" y="8" width="1" height="1" fill="#fff"/><rect x="8" y="8" width="1" height="1" fill="#ffff00"/><rect x="9" y="8" width="1" height="1" fill="#fff"/><rect x="10" y="8" width="3" height="1" fill="#ff0000"/><rect x="13" y="8" width="1" height="1" fill="#fff"/><rect x="14" y="8" width="1" height="1" fill="#ffff00"/><rect x="15" y="8" width="1" height="1" fill="#fff"/><rect x="16" y="8" width="1" height="1" fill="#ffff00"/><rect x="2" y="9" width="1" height="1" fill="#fff"/><rect x="3" y="9" width="1" height="1" fill="#ffff00"/><rect x="4" y="9" width="1" height="1" fill="#fff"/><rect x="5" y="9" width="1" height="1" fill="#ffff00"/><rect x="6" y="9" width="1" height="1" fill="#fff"/><rect x="7" y="9" width="1" height="1" fill="#ffff00"/><rect x="8" y="9" width="1" height="1" fill="#fff"/><rect x="9" y="9" width="3" height="1" fill="#ff0000"/><rect x="12" y="9" width="1" height="1" fill="#ffff00"/><rect x="13" y="9" width="1" height="1" fill="#fff"/><rect x="14" y="9" width="1" height="1" fill="#ffff00"/><rect x="15" y="9" width="1" height="1" fill="#fff"/><rect x="16" y="9" width="1" height="1" fill="#ffff00"/><rect x="17" y="9" width="1" height="1" fill="#fff"/><rect x="2" y="10" width="1" height="1" fill="#ffff00"/><rect x="3" y="10" width="1" height="1" fill="#fff"/><rect x="4" y="10" width="1" height="1" fill="#ffff00"/><rect x="5" y="10" width="1" height="1" fill="#fff"/><rect x="6" y="10" width="1" height="1" fill="#ffff00"/><rect x="7" y="10" width="1" height="1" fill="#fff"/><rect x="8" y="10" width="1" height="1" fill="#ffff00"/><rect x="9" y="10" width="2" height="1" fill="#ff0000"/><rect x="11" y="10" width="1" height="1" fill="#ffff00"/><rect x="12" y="10" width="1" height="1" fill="#fff"/><rect x="13" y="10" width="1" height="1" fill="#ffff00"/><rect x="14" y="10" width="1" height="1" fill="#fff"/><rect x="15" y="10" width="1" height="1" fill="#ffff00"/><rect x="16" y="10" width="1" height="1" fill="#fff"/><rect x="2" y="11" width="1" height="1" fill="#fff"/><rect x="3" y="11" width="1" height="1" fill="#ffff00"/><rect x="4" y="11" width="1" height="1" fill="#fff"/><rect x="5" y="11" width="1" height="1" fill="#ffff00"/><rect x="6" y="11" width="1" height="1" fill="#fff"/><rect x="7" y="11" width="1" height="1" fill="#ffff00"/><rect x="8" y="11" width="1" height="1" fill="#fff"/><rect x="9" y="11" width="2" height="1" fill="#ff0000"/><rect x="11" y="11" width="1" height="1" fill="#ffff00"/><rect x="12" y="11" width="1" height="1" fill="#fff"/><rect x="13" y="11" width="1" height="1" fill="#ffff00"/><rect x="14" y="11" width="1" height="1" fill="#fff"/><rect x="15" y="11" width="1" height="1" fill="#ffff00"/><rect x="16" y="11" width="1" height="1" fill="#fff"/><rect x="17" y="11" width="1" height="1" fill="#ffff00"/><rect x="3" y="12" width="1" height="1" fill="#ffff00"/><rect x="4" y="12" width="1" height="1" fill="#fff"/><rect x="5" y="12" width="1" height="1" fill="#ffff00"/><rect x="6" y="12" width="1" height="1" fill="#fff"/><rect x="7" y="12" width="1" height="1" fill="#ffff00"/><rect x="8" y="12" width="1" height="1" fill="#fff"/><rect x="9" y="12" width="1" height="1" fill="#ffff00"/><rect x="10" y="12" width="1" height="1" fill="#fff"/><rect x="11" y="12" width="1" height="1" fill="#ffff00"/><rect x="12" y="12" width="1" height="1" fill="#fff"/><rect x="13" y="12" width="1" height="1" fill="#ffff00"/><rect x="14" y="12" width="1" height="1" fill="#fff"/><rect x="15" y="12" width="1" height="1" fill="#ffff00"/><rect x="4" y="13" width="1" height="1" fill="#ffff00"/><rect x="5" y="13" width="1" height="1" fill="#fff"/><rect x="6" y="13" width="1" height="1" fill="#ffff00"/><rect x="7" y="13" width="1" height="1" fill="#fff"/><rect x="8" y="13" width="3" height="1" fill="#ff0000"/><rect x="11" y="13" width="1" height="1" fill="#ffff00"/><rect x="12" y="13" width="1" height="1" fill="#fff"/><rect x="13" y="13" width="1" height="1" fill="#ffff00"/><rect x="14" y="13" width="1" height="1" fill="#fff"/><rect x="15" y="13" width="1" height="1" fill="#ffff00"/><rect x="5" y="14" width="1" height="1" fill="#ffff00"/><rect x="6" y="14" width="1" height="1" fill="#fff"/><rect x="7" y="14" width="1" height="1" fill="#ffff00"/><rect x="8" y="14" width="4" height="1" fill="#ff0000"/><rect x="12" y="14" width="1" height="1" fill="#ffff00"/><rect x="13" y="14" width="1" height="1" fill="#fff"/><rect x="14" y="14" width="1" height="1" fill="#ffff00"/><rect x="7" y="15" width="1" height="1" fill="#fff"/><rect x="8" y="15" width="4" height="1" fill="#ff0000"/><rect x="12" y="15" width="1" height="1" fill="#fff"/><rect x="9" y="16" width="1" height="1" fill="#ffff00"/><rect x="10" y="16" width="1" height="1" fill="#fff"/><rect x="11" y="16" width="1" height="1" fill="#ffff00"/></svg>
<svg class="abs" style="left:518px;top:57px" width="20" height="16" shape-rendering="crispEdges"><rect x="15" y="3" width="2" height="1" fill="#ff0000"/><rect x="17" y="3" width="1" height="1" fill="#000"/><rect x="14" y="4" width="2" height="1" fill="#ff0000"/><rect x="16" y="4" width="1" height="1" fill="#000"/><rect x="13" y="5" width="2" height="1" fill="#ff0000"/><rect x="15" y="5" width="1" height="1" fill="#000"/><rect x="12" y="6" width="3" height="1" fill="#ff0000"/><rect x="15" y="6" width="1" height="1" fill="#000"/><rect x="11" y="7" width="3" height="1" fill="#ff0000"/><rect x="14" y="7" width="1" height="1" fill="#000"/><rect x="2" y="8" width="1" height="1" fill="#000"/><rect x="3" y="8" width="1" height="1" fill="#ff0000"/><rect x="11" y="8" width="2" height="1" fill="#ff0000"/><rect x="13" y="8" width="1" height="1" fill="#000"/><rect x="3" y="9" width="2" height="1" fill="#ff0000"/><rect x="5" y="9" width="1" height="1" fill="#000"/><rect x="10" y="9" width="3" height="1" fill="#ff0000"/><rect x="13" y="9" width="1" height="1" fill="#000"/><rect x="3" y="10" width="3" height="1" fill="#ff0000"/><rect x="6" y="10" width="1" height="1" fill="#000"/><rect x="9" y="10" width="3" height="1" fill="#ff0000"/><rect x="12" y="10" width="1" height="1" fill="#000"/><rect x="4" y="11" width="7" height="1" fill="#ff0000"/><rect x="11" y="11" width="1" height="1" fill="#000"/><rect x="5" y="12" width="5" height="1" fill="#ff0000"/><rect x="10" y="12" width="1" height="1" fill="#000"/><rect x="5" y="13" width="4" height="1" fill="#ff0000"/><rect x="9" y="13" width="1" height="1" fill="#000"/><rect x="6" y="14" width="2" height="1" fill="#ff0000"/><rect x="8" y="14" width="1" height="1" fill="#000"/><rect x="7" y="15" width="1" height="1" fill="#000"/></svg>
<div class="abs" style="left:4px;top:59px;width:2px;height:2px;background:#a8a8a8"></div>
<div class="abs" style="left:4px;top:63px;width:2px;height:2px;background:#a8a8a8"></div>
<div class="abs" style="left:4px;top:67px;width:2px;height:2px;background:#a8a8a8"></div>
<div class="abs" style="left:4px;top:71px;width:2px;height:2px;background:#a8a8a8"></div>
<div class="abs" style="left:128px;top:60px;width:1px;height:15px;background:#c4c4c4"></div>
<div class="abs" style="left:249px;top:60px;width:1px;height:15px;background:#c4c4c4"></div>
<div class="abs" style="left:393px;top:60px;width:1px;height:15px;background:#c4c4c4"></div>
<div class="abs" style="left:468px;top:60px;width:1px;height:15px;background:#c4c4c4"></div>
<!-- blue bar -->
<div class="abs" style="left:1px;top:80px;width:792px;height:25px;background:#87cefa"></div>
<div class="abs" style="left:1px;top:105px;width:792px;height:1px;background:#000"></div>
<div class="t11" style="left:7px;top:87px">Name</div>
<div class="abs" style="left:45px;top:83px;width:176px;height:18px;background:#fff;border-top:1px solid #a0a0a0;border-left:1px solid #a0a0a0;border-bottom:1px solid #ebe6e6;border-right:1px solid #b8b4b4"></div>
<div class="bb" style="left:48px;top:88px;transform:none">Untitled 2</div>
<div class="btn" style="left:230px;top:83px;width:49px;height:19px"></div>
<div class="t11" style="left:239px;top:88px">Linked</div>
<div class="abs" style="left:288px;top:83px;width:1px;height:22px;background:#000"></div>
<div class="t11" style="left:299px;top:87px">Find</div>
<div class="tb" style="left:329px;top:83px;width:108px;height:18px"></div>
<div class="btn" style="left:446px;top:83px;width:49px;height:19px"></div>
<div class="t11" style="left:463px;top:88px">Go</div>
<div class="abs" style="left:504px;top:80px;width:1px;height:25px;background:#000"></div>
<div class="cb" style="left:511px;top:85px"></div>
<div class="t11" style="left:530px;top:86px">Read Only</div>
<div class="cb" style="left:593px;top:86px"></div>
<div class="t11" style="left:611px;top:87px">On Search List</div>
<div class="abs" style="left:691px;top:80px;width:1px;height:25px;background:#000"></div>
<div class="t11" style="left:701px;top:87px">1 of 10</div>
<!-- client area -->
<div class="abs" style="left:1px;top:106px;width:792px;height:494px;background:#f0f0f0;border-top:1px solid #fff;border-left:1px solid #fff;border-right:1px solid #fff;border-bottom:1px solid #fff;box-sizing:border-box"></div>
<!-- tab pane -->
<div class="abs" style="left:13px;top:135px;width:770px;height:449px;box-sizing:border-box;border:1px solid #d9d9d9;background:#fff"></div>
<div class="abs" style="left:17px;top:137px;width:764px;height:444px;background:#f0f0f0"></div>
<!-- tabs -->
<div class="abs" style="left:81px;top:117px;width:227px;height:18px;box-sizing:border-box;border:1px solid #d9d9d9;border-bottom:none;background:#f0f0f0"></div>
<div class="abs" style="left:123px;top:117px;width:1px;height:18px;background:#d9d9d9"></div>
<div class="abs" style="left:167px;top:117px;width:1px;height:18px;background:#d9d9d9"></div>
<div class="abs" style="left:220px;top:117px;width:1px;height:18px;background:#d9d9d9"></div>
<div class="abs" style="left:266px;top:117px;width:1px;height:18px;background:#d9d9d9"></div>
<div class="abs" style="left:13px;top:115px;width:69px;height:22px;box-sizing:border-box;border:1px solid #d9d9d9;border-bottom:none;background:#fff"></div>
<div class="abs" style="left:16px;top:118px;width:63px;height:16px;box-sizing:border-box;border:1px dotted #000"></div>
<div class="t11" style="left:21px;top:119px">Description</div>
<div class="t11" style="left:86px;top:121px">Details</div>
<div class="t11" style="left:130px;top:121px">History</div>
<div class="t11" style="left:174px;top:121px">Features</div>
<div class="t11" style="left:227px;top:121px">Images</div>
<div class="t11" style="left:272px;top:121px">Dealer</div>
<!-- group boxes -->
<div class="grp" style="left:27px;top:147px;width:361px;height:423px"></div>
<div class="grp" style="left:409px;top:147px;width:361px;height:423px"></div>
<div class="lb" style="left:40px;top:168px">Country</div><div class="tb" style="left:157px;top:167px;width:200px"></div><div class="vl" style="left:160px;top:171px">Djibouti</div><div class="lb" style="left:422px;top:168px">User Defined</div><div class="tb" style="left:539px;top:167px;width:200px"></div><div class="lb" style="left:40px;top:198px">Grade</div><div class="tb" style="left:157px;top:197px;width:200px"></div><div class="vl" style="left:160px;top:201px">G-4</div><div class="lb" style="left:422px;top:198px">Grading Service</div><div class="tb" style="left:539px;top:197px;width:200px"></div><div class="lb" style="left:40px;top:228px">Metal</div><div class="tb" style="left:157px;top:227px;width:200px"></div><div class="vl" style="left:160px;top:231px">Platinum</div><div class="lb" style="left:422px;top:228px">Value</div><div class="tb" style="left:539px;top:227px;width:200px"></div><div class="vl" style="left:542px;top:231px">0.00</div><div class="lb" style="left:40px;top:258px">Type</div><div class="tb" style="left:157px;top:257px;width:200px"></div><div class="vl" style="left:160px;top:261px">Legal Tender</div><div class="lb" style="left:422px;top:258px">Date Received</div><div class="tb" style="left:539px;top:257px;width:170px"></div><svg class="abs" style="left:684px;top:261px" width="23" height="14" shape-rendering="crispEdges"><rect x="1" y="0" width="9" height="1" fill="#6e6460"/><rect x="0" y="1" width="1" height="1" fill="#6e6460"/><rect x="1" y="1" width="9" height="1" fill="#f4f6fa"/><rect x="10" y="1" width="1" height="1" fill="#6e6460"/><rect x="0" y="2" width="1" height="1" fill="#6e6460"/><rect x="1" y="2" width="1" height="1" fill="#f4f6fa"/><rect x="2" y="2" width="8" height="1" fill="#dfe6f0"/><rect x="10" y="2" width="1" height="1" fill="#6e6460"/><rect x="0" y="3" width="1" height="1" fill="#6e6460"/><rect x="1" y="3" width="1" height="1" fill="#f4f6fa"/><rect x="2" y="3" width="7" height="1" fill="#a9aeb6"/><rect x="9" y="3" width="1" height="1" fill="#dfe6f0"/><rect x="10" y="3" width="1" height="1" fill="#6e6460"/><rect x="0" y="4" width="1" height="1" fill="#6e6460"/><rect x="1" y="4" width="1" height="1" fill="#f4f6fa"/><rect x="2" y="4" width="1" height="1" fill="#a9aeb6"/><rect x="3" y="4" width="1" height="1" fill="#ffffff"/><rect x="4" y="4" width="1" height="1" fill="#a9aeb6"/><rect x="5" y="4" width="1" height="1" fill="#ffffff"/><rect x="6" y="4" width="1" height="1" fill="#a9aeb6"/><rect x="7" y="4" width="1" height="1" fill="#ffffff"/><rect x="8" y="4" width="1" height="1" fill="#a9aeb6"/><rect x="9" y="4" width="1" height="1" fill="#dfe6f0"/><rect x="10" y="4" width="1" height="1" fill="#6e6460"/><rect x="13" y="4" width="7" height="1" fill="#3c5a8c"/><rect x="0" y="5" width="1" height="1" fill="#6e6460"/><rect x="1" y="5" width="1" height="1" fill="#f4f6fa"/><rect x="2" y="5" width="7" height="1" fill="#a9aeb6"/><rect x="9" y="5" width="1" height="1" fill="#dfe6f0"/><rect x="10" y="5" width="1" height="1" fill="#6e6460"/><rect x="14" y="5" width="5" height="1" fill="#3c5a8c"/><rect x="0" y="6" width="1" height="1" fill="#6e6460"/><rect x="1" y="6" width="1" height="1" fill="#f4f6fa"/><rect x="2" y="6" width="1" height="1" fill="#a9aeb6"/><rect x="3" y="6" width="1" height="1" fill="#ffffff"/><rect x="4" y="6" width="1" height="1" fill="#a9aeb6"/><rect x="5" y="6" width="1" height="1" fill="#ffffff"/><rect x="6" y="6" width="1" height="1" fill="#a9aeb6"/><rect x="7" y="6" width="1" height="1" fill="#ffffff"/><rect x="8" y="6" width="1" height="1" fill="#a9aeb6"/><rect x="9" y="6" width="1" height="1" fill="#dfe6f0"/><rect x="10" y="6" width="1" height="1" fill="#6e6460"/><rect x="15" y="6" width="3" height="1" fill="#3c5a8c"/><rect x="0" y="7" width="1" height="1" fill="#6e6460"/><rect x="1" y="7" width="1" height="1" fill="#f4f6fa"/><rect x="2" y="7" width="7" height="1" fill="#a9aeb6"/><rect x="9" y="7" width="1" height="1" fill="#dfe6f0"/><rect x="10" y="7" width="1" height="1" fill="#6e6460"/><rect x="16" y="7" width="1" height="1" fill="#3c5a8c"/><rect x="0" y="8" width="1" height="1" fill="#6e6460"/><rect x="1" y="8" width="1" height="1" fill="#f4f6fa"/><rect x="2" y="8" width="1" height="1" fill="#a9aeb6"/><rect x="3" y="8" width="1" height="1" fill="#ffffff"/><rect x="4" y="8" width="1" height="1" fill="#a9aeb6"/><rect x="5" y="8" width="1" height="1" fill="#ffffff"/><rect x="6" y="8" width="1" height="1" fill="#a9aeb6"/><rect x="7" y="8" width="1" height="1" fill="#ffffff"/><rect x="8" y="8" width="1" height="1" fill="#a9aeb6"/><rect x="9" y="8" width="1" height="1" fill="#dfe6f0"/><rect x="10" y="8" width="1" height="1" fill="#6e6460"/><rect x="0" y="9" width="1" height="1" fill="#6e6460"/><rect x="1" y="9" width="1" height="1" fill="#f4f6fa"/><rect x="2" y="9" width="7" height="1" fill="#a9aeb6"/><rect x="9" y="9" width="1" height="1" fill="#dfe6f0"/><rect x="10" y="9" width="1" height="1" fill="#6e6460"/><rect x="0" y="10" width="1" height="1" fill="#6e6460"/><rect x="1" y="10" width="1" height="1" fill="#f4f6fa"/><rect x="2" y="10" width="7" height="1" fill="#dfe6f0"/><rect x="9" y="10" width="2" height="1" fill="#6e6460"/><rect x="1" y="11" width="8" height="1" fill="#6e6460"/><rect x="9" y="11" width="1" height="1" fill="#d8d8d8"/></svg><div class="ebtn" style="left:713px;top:258px"></div><svg class="abs" style="left:712px;top:256px" width="26" height="22" shape-rendering="crispEdges"><rect x="7" y="5" width="1" height="1" fill="#000"/><rect x="17" y="5" width="2" height="1" fill="#000"/><rect x="19" y="5" width="2" height="1" fill="#ffff00"/><rect x="15" y="6" width="2" height="1" fill="#000"/><rect x="17" y="6" width="4" height="1" fill="#ffff00"/><rect x="21" y="6" width="1" height="1" fill="#000"/><rect x="8" y="7" width="1" height="1" fill="#000"/><rect x="14" y="7" width="1" height="1" fill="#000"/><rect x="15" y="7" width="1" height="1" fill="#ffff00"/><rect x="16" y="7" width="1" height="1" fill="#000"/><rect x="17" y="7" width="1" height="1" fill="#ffff00"/><rect x="18" y="7" width="1" height="1" fill="#000"/><rect x="19" y="7" width="1" height="1" fill="#ffff00"/><rect x="20" y="7" width="2" height="1" fill="#000"/><rect x="13" y="8" width="1" height="1" fill="#000"/><rect x="14" y="8" width="1" height="1" fill="#ffff00"/><rect x="15" y="8" width="1" height="1" fill="#000"/><rect x="16" y="8" width="1" height="1" fill="#ffff00"/><rect x="17" y="8" width="1" height="1" fill="#000"/><rect x="18" y="8" width="1" height="1" fill="#ffff00"/><rect x="19" y="8" width="2" height="1" fill="#000"/><rect x="5" y="9" width="2" height="1" fill="#000"/><rect x="9" y="9" width="1" height="1" fill="#000"/><rect x="12" y="9" width="1" height="1" fill="#000"/><rect x="13" y="9" width="1" height="1" fill="#ff0000"/><rect x="14" y="9" width="1" height="1" fill="#000"/><rect x="15" y="9" width="1" height="1" fill="#ffff00"/><rect x="16" y="9" width="1" height="1" fill="#000"/><rect x="17" y="9" width="1" height="1" fill="#ffff00"/><rect x="18" y="9" width="2" height="1" fill="#000"/><rect x="4" y="10" width="4" height="1" fill="#000"/><rect x="11" y="10" width="1" height="1" fill="#000"/><rect x="12" y="10" width="4" height="1" fill="#ff0000"/><rect x="16" y="10" width="3" height="1" fill="#000"/><rect x="4" y="11" width="2" height="1" fill="#000"/><rect x="7" y="11" width="1" height="1" fill="#000"/><rect x="10" y="11" width="1" height="1" fill="#000"/><rect x="11" y="11" width="5" height="1" fill="#ff0000"/><rect x="16" y="11" width="2" height="1" fill="#000"/><rect x="8" y="12" width="1" height="1" fill="#000"/><rect x="10" y="12" width="1" height="1" fill="#000"/><rect x="11" y="12" width="5" height="1" fill="#ff0000"/><rect x="16" y="12" width="1" height="1" fill="#000"/><rect x="5" y="13" width="2" height="1" fill="#000"/><rect x="8" y="13" width="1" height="1" fill="#000"/><rect x="11" y="13" width="1" height="1" fill="#000"/><rect x="12" y="13" width="3" height="1" fill="#ff0000"/><rect x="15" y="13" width="1" height="1" fill="#000"/><rect x="4" y="14" width="3" height="1" fill="#000"/><rect x="8" y="14" width="2" height="1" fill="#000"/><rect x="12" y="14" width="3" height="1" fill="#000"/><rect x="3" y="15" width="3" height="1" fill="#000"/><rect x="8" y="15" width="3" height="1" fill="#000"/><rect x="21" y="15" width="1" height="1" fill="#909090"/><rect x="3" y="16" width="2" height="1" fill="#000"/><rect x="7" y="16" width="4" height="1" fill="#000"/><rect x="13" y="16" width="1" height="1" fill="#000"/><rect x="21" y="16" width="1" height="1" fill="#909090"/></svg><div class="lb" style="left:40px;top:288px">Mint</div><div class="tb" style="left:157px;top:287px;width:200px"></div><div class="vl" style="left:160px;top:291px">Bermuda Monetary Authorit</div><div class="lb" style="left:422px;top:288px">Date</div><div class="tb" style="left:539px;top:287px;width:170px"></div><svg class="abs" style="left:684px;top:291px" width="23" height="14" shape-rendering="crispEdges"><rect x="1" y="0" width="9" height="1" fill="#6e6460"/><rect x="0" y="1" width="1" height="1" fill="#6e6460"/><rect x="1" y="1" width="9" height="1" fill="#f4f6fa"/><rect x="10" y="1" width="1" height="1" fill="#6e6460"/><rect x="0" y="2" width="1" height="1" fill="#6e6460"/><rect x="1" y="2" width="1" height="1" fill="#f4f6fa"/><rect x="2" y="2" width="8" height="1" fill="#dfe6f0"/><rect x="10" y="2" width="1" height="1" fill="#6e6460"/><rect x="0" y="3" width="1" height="1" fill="#6e6460"/><rect x="1" y="3" width="1" height="1" fill="#f4f6fa"/><rect x="2" y="3" width="7" height="1" fill="#a9aeb6"/><rect x="9" y="3" width="1" height="1" fill="#dfe6f0"/><rect x="10" y="3" width="1" height="1" fill="#6e6460"/><rect x="0" y="4" width="1" height="1" fill="#6e6460"/><rect x="1" y="4" width="1" height="1" fill="#f4f6fa"/><rect x="2" y="4" width="1" height="1" fill="#a9aeb6"/><rect x="3" y="4" width="1" height="1" fill="#ffffff"/><rect x="4" y="4" width="1" height="1" fill="#a9aeb6"/><rect x="5" y="4" width="1" height="1" fill="#ffffff"/><rect x="6" y="4" width="1" height="1" fill="#a9aeb6"/><rect x="7" y="4" width="1" height="1" fill="#ffffff"/><rect x="8" y="4" width="1" height="1" fill="#a9aeb6"/><rect x="9" y="4" width="1" height="1" fill="#dfe6f0"/><rect x="10" y="4" width="1" height="1" fill="#6e6460"/><rect x="13" y="4" width="7" height="1" fill="#3c5a8c"/><rect x="0" y="5" width="1" height="1" fill="#6e6460"/><rect x="1" y="5" width="1" height="1" fill="#f4f6fa"/><rect x="2" y="5" width="7" height="1" fill="#a9aeb6"/><rect x="9" y="5" width="1" height="1" fill="#dfe6f0"/><rect x="10" y="5" width="1" height="1" fill="#6e6460"/><rect x="14" y="5" width="5" height="1" fill="#3c5a8c"/><rect x="0" y="6" width="1" height="1" fill="#6e6460"/><rect x="1" y="6" width="1" height="1" fill="#f4f6fa"/><rect x="2" y="6" width="1" height="1" fill="#a9aeb6"/><rect x="3" y="6" width="1" height="1" fill="#ffffff"/><rect x="4" y="6" width="1" height="1" fill="#a9aeb6"/><rect x="5" y="6" width="1" height="1" fill="#ffffff"/><rect x="6" y="6" width="1" height="1" fill="#a9aeb6"/><rect x="7" y="6" width="1" height="1" fill="#ffffff"/><rect x="8" y="6" width="1" height="1" fill="#a9aeb6"/><rect x="9" y="6" width="1" height="1" fill="#dfe6f0"/><rect x="10" y="6" width="1" height="1" fill="#6e6460"/><rect x="15" y="6" width="3" height="1" fill="#3c5a8c"/><rect x="0" y="7" width="1" height="1" fill="#6e6460"/><rect x="1" y="7" width="1" height="1" fill="#f4f6fa"/><rect x="2" y="7" width="7" height="1" fill="#a9aeb6"/><rect x="9" y="7" width="1" height="1" fill="#dfe6f0"/><rect x="10" y="7" width="1" height="1" fill="#6e6460"/><rect x="16" y="7" width="1" height="1" fill="#3c5a8c"/><rect x="0" y="8" width="1" height="1" fill="#6e6460"/><rect x="1" y="8" width="1" height="1" fill="#f4f6fa"/><rect x="2" y="8" width="1" height="1" fill="#a9aeb6"/><rect x="3" y="8" width="1" height="1" fill="#ffffff"/><rect x="4" y="8" width="1" height="1" fill="#a9aeb6"/><rect x="5" y="8" width="1" height="1" fill="#ffffff"/><rect x="6" y="8" width="1" height="1" fill="#a9aeb6"/><rect x="7" y="8" width="1" height="1" fill="#ffffff"/><rect x="8" y="8" width="1" height="1" fill="#a9aeb6"/><rect x="9" y="8" width="1" height="1" fill="#dfe6f0"/><rect x="10" y="8" width="1" height="1" fill="#6e6460"/><rect x="0" y="9" width="1" height="1" fill="#6e6460"/><rect x="1" y="9" width="1" height="1" fill="#f4f6fa"/><rect x="2" y="9" width="7" height="1" fill="#a9aeb6"/><rect x="9" y="9" width="1" height="1" fill="#dfe6f0"/><rect x="10" y="9" width="1" height="1" fill="#6e6460"/><rect x="0" y="10" width="1" height="1" fill="#6e6460"/><rect x="1" y="10" width="1" height="1" fill="#f4f6fa"/><rect x="2" y="10" width="7" height="1" fill="#dfe6f0"/><rect x="9" y="10" width="2" height="1" fill="#6e6460"/><rect x="1" y="11" width="8" height="1" fill="#6e6460"/><rect x="9" y="11" width="1" height="1" fill="#d8d8d8"/></svg><div class="ebtn" style="left:713px;top:288px"></div><svg class="abs" style="left:712px;top:286px" width="26" height="22" shape-rendering="crispEdges"><rect x="7" y="5" width="1" height="1" fill="#000"/><rect x="17" y="5" width="2" height="1" fill="#000"/><rect x="19" y="5" width="2" height="1" fill="#ffff00"/><rect x="15" y="6" width="2" height="1" fill="#000"/><rect x="17" y="6" width="4" height="1" fill="#ffff00"/><rect x="21" y="6" width="1" height="1" fill="#000"/><rect x="8" y="7" width="1" height="1" fill="#000"/><rect x="14" y="7" width="1" height="1" fill="#000"/><rect x="15" y="7" width="1" height="1" fill="#ffff00"/><rect x="16" y="7" width="1" height="1" fill="#000"/><rect x="17" y="7" width="1" height="1" fill="#ffff00"/><rect x="18" y="7" width="1" height="1" fill="#000"/><rect x="19" y="7" width="1" height="1" fill="#ffff00"/><rect x="20" y="7" width="2" height="1" fill="#000"/><rect x="13" y="8" width="1" height="1" fill="#000"/><rect x="14" y="8" width="1" height="1" fill="#ffff00"/><rect x="15" y="8" width="1" height="1" fill="#000"/><rect x="16" y="8" width="1" height="1" fill="#ffff00"/><rect x="17" y="8" width="1" height="1" fill="#000"/><rect x="18" y="8" width="1" height="1" fill="#ffff00"/><rect x="19" y="8" width="2" height="1" fill="#000"/><rect x="5" y="9" width="2" height="1" fill="#000"/><rect x="9" y="9" width="1" height="1" fill="#000"/><rect x="12" y="9" width="1" height="1" fill="#000"/><rect x="13" y="9" width="1" height="1" fill="#ff0000"/><rect x="14" y="9" width="1" height="1" fill="#000"/><rect x="15" y="9" width="1" height="1" fill="#ffff00"/><rect x="16" y="9" width="1" height="1" fill="#000"/><rect x="17" y="9" width="1" height="1" fill="#ffff00"/><rect x="18" y="9" width="2" height="1" fill="#000"/><rect x="4" y="10" width="4" height="1" fill="#000"/><rect x="11" y="10" width="1" height="1" fill="#000"/><rect x="12" y="10" width="4" height="1" fill="#ff0000"/><rect x="16" y="10" width="3" height="1" fill="#000"/><rect x="4" y="11" width="2" height="1" fill="#000"/><rect x="7" y="11" width="1" height="1" fill="#000"/><rect x="10" y="11" width="1" height="1" fill="#000"/><rect x="11" y="11" width="5" height="1" fill="#ff0000"/><rect x="16" y="11" width="2" height="1" fill="#000"/><rect x="8" y="12" width="1" height="1" fill="#000"/><rect x="10" y="12" width="1" height="1" fill="#000"/><rect x="11" y="12" width="5" height="1" fill="#ff0000"/><rect x="16" y="12" width="1" height="1" fill="#000"/><rect x="5" y="13" width="2" height="1" fill="#000"/><rect x="8" y="13" width="1" height="1" fill="#000"/><rect x="11" y="13" width="1" height="1" fill="#000"/><rect x="12" y="13" width="3" height="1" fill="#ff0000"/><rect x="15" y="13" width="1" height="1" fill="#000"/><rect x="4" y="14" width="3" height="1" fill="#000"/><rect x="8" y="14" width="2" height="1" fill="#000"/><rect x="12" y="14" width="3" height="1" fill="#000"/><rect x="3" y="15" width="3" height="1" fill="#000"/><rect x="8" y="15" width="3" height="1" fill="#000"/><rect x="21" y="15" width="1" height="1" fill="#909090"/><rect x="3" y="16" width="2" height="1" fill="#000"/><rect x="7" y="16" width="4" height="1" fill="#000"/><rect x="13" y="16" width="1" height="1" fill="#000"/><rect x="21" y="16" width="1" height="1" fill="#909090"/></svg><div class="lb" style="left:40px;top:318px">Artist</div><div class="tb" style="left:157px;top:317px;width:200px"></div><div class="vl" style="left:160px;top:321px">Augustus Saint-Gaudens</div><div class="lb" style="left:422px;top:318px">Collector #</div><div class="tb" style="left:539px;top:317px;width:200px"></div><div class="lb" style="left:40px;top:348px">Rarity</div><div class="tb" style="left:157px;top:347px;width:200px"></div><div class="vl" style="left:160px;top:351px">Very Common</div><div class="lb" style="left:422px;top:348px">Circulation</div><div class="tb" style="left:539px;top:347px;width:200px"></div><div class="lb" style="left:40px;top:378px">Location</div><div class="tb" style="left:157px;top:377px;width:200px"></div><div class="lb" style="left:422px;top:378px">User Defined</div><div class="tb" style="left:539px;top:377px;width:200px"></div><div class="lb" style="left:40px;top:408px">Status</div><div class="tb" style="left:157px;top:407px;width:200px"></div><div class="vl" style="left:160px;top:411px">Forsale</div><div class="lb" style="left:422px;top:408px">User Defined</div><div class="tb" style="left:539px;top:407px;width:200px"></div><div class="lb" style="left:40px;top:438px">User Defined</div><div class="tb" style="left:157px;top:437px;width:200px"></div><div class="lb" style="left:422px;top:438px">Cost</div><div class="tb" style="left:539px;top:437px;width:200px"></div><div class="vl" style="left:542px;top:441px">0.00</div><div class="lb" style="left:40px;top:468px">User Defined</div><div class="tb" style="left:157px;top:467px;width:200px"></div><div class="lb" style="left:422px;top:468px">Quantity</div><div class="tb" style="left:539px;top:467px;width:200px"></div><div class="lb" style="left:40px;top:498px">User Defined</div><div class="tb" style="left:157px;top:497px;width:200px"></div><div class="lb" style="left:422px;top:498px">User Defined</div><div class="tb" style="left:539px;top:497px;width:200px"></div><div class="lb" style="left:40px;top:528px">User Defined</div><div class="tb" style="left:157px;top:527px;width:200px"></div><div class="lb" style="left:422px;top:528px">User Defined</div><div class="tb" style="left:539px;top:527px;width:200px"></div>
<div class="abs" style="left:0;top:0;width:792px;height:599px;border:1px solid #020c18"></div>
</div>
</body></html>
